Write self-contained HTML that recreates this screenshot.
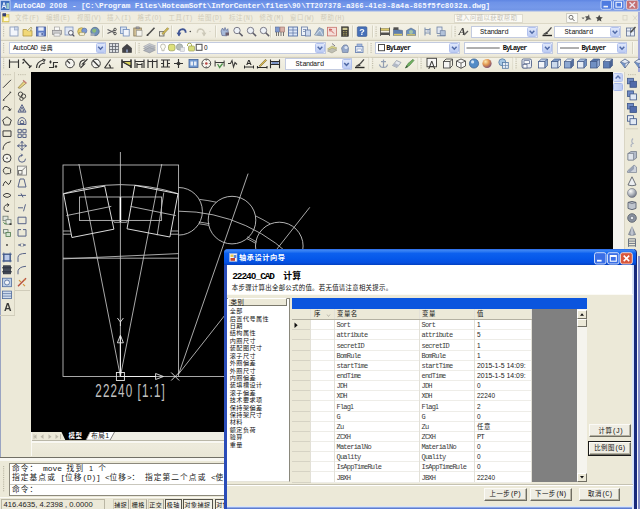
<!DOCTYPE html>
<html><head><meta charset="utf-8">
<style>
html,body{margin:0;padding:0;}
body{width:640px;height:509px;overflow:hidden;position:relative;background:#ece9d8;font-family:"Liberation Mono","Noto Sans CJK SC",monospace;font-size:8px;color:#000;}
.a{position:absolute;box-sizing:border-box;}
.t{position:absolute;white-space:pre;}
.l{font-family:"Liberation Mono",monospace;}
.d{font-family:"Liberation Sans",sans-serif;}
.c{font-family:"Liberation Sans","Noto Sans CJK SC",sans-serif;}
svg{position:absolute;left:0;top:0;overflow:visible;}
</style></head><body>
<div class="a" style="left:0.0px;top:0.0px;width:640.0px;height:12.0px;background:linear-gradient(#5f86e2 0%,#6e93e8 20%,#7699ea 60%,#7094e6 84%,#b9c6e6 94%,#e6e6e0 100%);"></div><div class="t" style="left:13.5px;top:-0.4px;height:12px;line-height:12px;color:#f4f7ff;font-weight:bold;"><span class="l" style="font-size:7.70px;letter-spacing:-0.12px">AutoCAD </span><span class="d" style="font-size:7.08px;letter-spacing:0.56px">2008</span><span class="l" style="font-size:7.70px;letter-spacing:-0.12px"> - [C:\Program Files\HoteamSoft\InforCenter\files\</span><span class="d" style="font-size:7.08px;letter-spacing:0.56px">90</span><span class="l" style="font-size:7.70px;letter-spacing:-0.12px">\TT</span><span class="d" style="font-size:7.08px;letter-spacing:0.56px">207378</span><span class="l" style="font-size:7.70px;letter-spacing:-0.12px">-a</span><span class="d" style="font-size:7.08px;letter-spacing:0.56px">366</span><span class="l" style="font-size:7.70px;letter-spacing:-0.12px">-</span><span class="d" style="font-size:7.08px;letter-spacing:0.56px">41</span><span class="l" style="font-size:7.70px;letter-spacing:-0.12px">e</span><span class="d" style="font-size:7.08px;letter-spacing:0.56px">3</span><span class="l" style="font-size:7.70px;letter-spacing:-0.12px">-</span><span class="d" style="font-size:7.08px;letter-spacing:0.56px">8</span><span class="l" style="font-size:7.70px;letter-spacing:-0.12px">a</span><span class="d" style="font-size:7.08px;letter-spacing:0.56px">4</span><span class="l" style="font-size:7.70px;letter-spacing:-0.12px">a-</span><span class="d" style="font-size:7.08px;letter-spacing:0.56px">865</span><span class="l" style="font-size:7.70px;letter-spacing:-0.12px">f</span><span class="d" style="font-size:7.08px;letter-spacing:0.56px">5</span><span class="l" style="font-size:7.70px;letter-spacing:-0.12px">fc</span><span class="d" style="font-size:7.08px;letter-spacing:0.56px">8032</span><span class="l" style="font-size:7.70px;letter-spacing:-0.12px">a.dwg]</span></div><div class="a" style="left:0.0px;top:12.0px;width:640.0px;height:12.0px;background:#f0eddf;"></div><div class="a" style="left:0.0px;top:23.2px;width:640.0px;height:1.0px;background:#dcd8c6;"></div><div class="t" style="left:15.0px;top:12.3px;height:12px;line-height:12px;color:#cfcbb9;"><span class="c" style="font-size:6.42px;letter-spacing:0.48px">文件</span><span class="l" style="font-size:6.49px;letter-spacing:-0.59px">(F)</span></div><div class="t" style="left:46.0px;top:12.3px;height:12px;line-height:12px;color:#cfcbb9;"><span class="c" style="font-size:6.42px;letter-spacing:0.48px">编辑</span><span class="l" style="font-size:6.49px;letter-spacing:-0.59px">(E)</span></div><div class="t" style="left:77.0px;top:12.3px;height:12px;line-height:12px;color:#cfcbb9;"><span class="c" style="font-size:6.42px;letter-spacing:0.48px">视图</span><span class="l" style="font-size:6.49px;letter-spacing:-0.59px">(V)</span></div><div class="t" style="left:107.0px;top:12.3px;height:12px;line-height:12px;color:#cfcbb9;"><span class="c" style="font-size:6.42px;letter-spacing:0.48px">插入</span><span class="l" style="font-size:6.49px;letter-spacing:-0.59px">(I)</span></div><div class="t" style="left:137.5px;top:12.3px;height:12px;line-height:12px;color:#cfcbb9;"><span class="c" style="font-size:6.42px;letter-spacing:0.48px">格式</span><span class="l" style="font-size:6.49px;letter-spacing:-0.59px">(O)</span></div><div class="t" style="left:168.5px;top:12.3px;height:12px;line-height:12px;color:#cfcbb9;"><span class="c" style="font-size:6.42px;letter-spacing:0.48px">工具</span><span class="l" style="font-size:6.49px;letter-spacing:-0.59px">(T)</span></div><div class="t" style="left:198.0px;top:12.3px;height:12px;line-height:12px;color:#cfcbb9;"><span class="c" style="font-size:6.42px;letter-spacing:0.48px">绘图</span><span class="l" style="font-size:6.49px;letter-spacing:-0.59px">(D)</span></div><div class="t" style="left:229.0px;top:12.3px;height:12px;line-height:12px;color:#cfcbb9;"><span class="c" style="font-size:6.42px;letter-spacing:0.48px">标注</span><span class="l" style="font-size:6.49px;letter-spacing:-0.59px">(N)</span></div><div class="t" style="left:259.5px;top:12.3px;height:12px;line-height:12px;color:#cfcbb9;"><span class="c" style="font-size:6.42px;letter-spacing:0.48px">修改</span><span class="l" style="font-size:6.49px;letter-spacing:-0.59px">(M)</span></div><div class="t" style="left:290.0px;top:12.3px;height:12px;line-height:12px;color:#cfcbb9;"><span class="c" style="font-size:6.42px;letter-spacing:0.48px">窗口</span><span class="l" style="font-size:6.49px;letter-spacing:-0.59px">(W)</span></div><div class="t" style="left:320.5px;top:12.3px;height:12px;line-height:12px;color:#cfcbb9;"><span class="c" style="font-size:6.42px;letter-spacing:0.48px">帮助</span><span class="l" style="font-size:6.49px;letter-spacing:-0.59px">(H)</span></div><div class="a" style="left:453.8px;top:13.5px;width:69.5px;height:9.5px;background:#fbfaf4;border:1px solid #dedbcd;"></div><div class="t" style="left:456.3px;top:12.4px;height:12px;line-height:12px;color:#c4c1b4;"><span class="c" style="font-size:6.32px;letter-spacing:0.48px">键入问题以获取帮助</span></div><div class="a" style="left:0.0px;top:24.0px;width:640.0px;height:48.0px;background:linear-gradient(#f3f1e6 0,#efecde 14px,#e6e2d0 16px,#f3f1e6 17px,#efecde 31px,#e6e2d0 33px,#f3f1e6 34px,#ece9d8 48px);"></div><div class="a" style="left:0.0px;top:39.8px;width:640.0px;height:0.8px;background:#d3cfbc;"></div><div class="a" style="left:0.0px;top:56.5px;width:640.0px;height:0.8px;background:#d3cfbc;"></div><div class="a" style="left:470.5px;top:25.5px;width:67.0px;height:12.5px;background:#fff;border:1px solid #c3cbe0;"></div><div class="a" style="left:527.0px;top:26.5px;width:10.0px;height:10.5px;background:linear-gradient(#dfe7fb,#bccbf3);border:0.6px solid #b1c1ee;border-radius:1.5px;"></div><div class="t" style="left:480.0px;top:25.8px;height:12px;line-height:12px;color:#222;"><span class="l" style="font-size:7.00px;letter-spacing:-0.70px">Standard</span></div><div class="a" style="left:554.0px;top:25.5px;width:66.5px;height:12.5px;background:#fff;border:1px solid #c3cbe0;"></div><div class="a" style="left:610.0px;top:26.5px;width:10.0px;height:10.5px;background:linear-gradient(#dfe7fb,#bccbf3);border:0.6px solid #b1c1ee;border-radius:1.5px;"></div><div class="t" style="left:564.4px;top:25.8px;height:12px;line-height:12px;color:#222;"><span class="l" style="font-size:7.00px;letter-spacing:-0.70px">Standard</span></div><div class="a" style="left:8.5px;top:41.5px;width:97.5px;height:12.5px;background:#fff;border:1px solid #c3cbe0;"></div><div class="a" style="left:95.5px;top:42.5px;width:10.0px;height:10.5px;background:linear-gradient(#dfe7fb,#bccbf3);border:0.6px solid #b1c1ee;border-radius:1.5px;"></div><div class="t" style="left:13.0px;top:42.0px;height:12px;line-height:12px;color:#111;"><span class="l" style="font-size:7.00px;letter-spacing:-0.76px">AutoCAD </span><span class="c" style="font-size:5.86px;letter-spacing:0.44px">经典</span></div><div class="a" style="left:157.0px;top:41.5px;width:168.5px;height:12.5px;background:#fff;border:1px solid #c3cbe0;"></div><div class="a" style="left:315.0px;top:42.5px;width:10.0px;height:10.5px;background:linear-gradient(#dfe7fb,#bccbf3);border:0.6px solid #b1c1ee;border-radius:1.5px;"></div><div class="t" style="left:204.0px;top:42.0px;height:12px;line-height:12px;color:#111;"><span class="d" style="font-size:6.44px;letter-spacing:-0.14px">0</span></div><div class="a" style="left:374.5px;top:41.5px;width:85.3px;height:12.5px;background:#fff;border:1px solid #c3cbe0;"></div><div class="a" style="left:449.3px;top:42.5px;width:10.0px;height:10.5px;background:linear-gradient(#dfe7fb,#bccbf3);border:0.6px solid #b1c1ee;border-radius:1.5px;"></div><div class="t" style="left:386.3px;top:42.0px;height:12px;line-height:12px;color:#111;font-weight:bold;"><span class="l" style="font-size:7.00px;letter-spacing:-0.76px">ByLayer</span></div><div class="a" style="left:463.5px;top:41.5px;width:89.3px;height:12.5px;background:#fff;border:1px solid #c3cbe0;"></div><div class="a" style="left:542.3px;top:42.5px;width:10.0px;height:10.5px;background:linear-gradient(#dfe7fb,#bccbf3);border:0.6px solid #b1c1ee;border-radius:1.5px;"></div><div class="t" style="left:502.7px;top:42.0px;height:12px;line-height:12px;color:#111;font-weight:bold;"><span class="l" style="font-size:7.00px;letter-spacing:-0.76px">ByLayer</span></div><div class="a" style="left:557.3px;top:41.5px;width:70.2px;height:12.5px;background:#fff;border:1px solid #c3cbe0;"></div><div class="a" style="left:617.0px;top:42.5px;width:10.0px;height:10.5px;background:linear-gradient(#dfe7fb,#bccbf3);border:0.6px solid #b1c1ee;border-radius:1.5px;"></div><div class="t" style="left:581.5px;top:42.0px;height:12px;line-height:12px;color:#111;font-weight:bold;"><span class="l" style="font-size:7.00px;letter-spacing:-0.76px">ByLayer</span></div><div class="a" style="left:285.0px;top:57.5px;width:67.0px;height:12.8px;background:#fff;border:1px solid #c3cbe0;"></div><div class="a" style="left:341.5px;top:58.5px;width:10.0px;height:10.8px;background:linear-gradient(#dfe7fb,#bccbf3);border:0.6px solid #b1c1ee;border-radius:1.5px;"></div><div class="t" style="left:295.5px;top:58.0px;height:12px;line-height:12px;color:#222;"><span class="l" style="font-size:7.00px;letter-spacing:-0.70px">Standard</span></div><div class="a" style="left:0.0px;top:72.0px;width:30.0px;height:370.0px;background:#ece9d8;"></div><div class="a" style="left:14.3px;top:72.0px;width:0.8px;height:244.0px;background:#d6d2c0;"></div><div class="a" style="left:0.0px;top:12.0px;width:1.2px;height:486.0px;background:#9aa4c2;"></div><div class="a" style="left:638.3px;top:12.0px;width:1.7px;height:497.0px;background:#a4aadc;"></div><div class="a" style="left:0.0px;top:315.0px;width:15.0px;height:0.8px;background:#d0ccba;"></div><div class="a" style="left:14.5px;top:290.0px;width:15.0px;height:0.8px;background:#d0ccba;"></div><div class="a" style="left:612.0px;top:72.0px;width:12.0px;height:360.0px;background:#f4f3ee;"></div><div class="a" style="left:612.0px;top:72.0px;width:0.8px;height:360.0px;background:#fff;"></div><div class="a" style="left:612.8px;top:72.5px;width:10.5px;height:9.5px;background:linear-gradient(90deg,#dfe7fb,#c3d0f5);border:0.6px solid #b4c3ee;border-radius:1.5px;"></div><div class="a" style="left:612.8px;top:82.5px;width:10.5px;height:8.0px;background:linear-gradient(90deg,#d2defa,#bccbf3);border:0.6px solid #a6b8ea;border-radius:1.5px;"></div><div class="a" style="left:623.5px;top:72.0px;width:16.5px;height:360.0px;background:#ece9d8;"></div><div class="a" style="left:623.5px;top:72.0px;width:0.8px;height:360.0px;background:#d9d5c4;"></div><svg width="640" height="509" viewBox="0 0 640 509" style="filter:blur(0.3px);opacity:0.88"><defs><radialGradient id="gor" cx="0.35" cy="0.3" r="0.8"><stop offset="0" stop-color="#ffe9a8"/><stop offset="0.45" stop-color="#e08a3c"/><stop offset="1" stop-color="#5a2a6a"/></radialGradient><radialGradient id="ggr" cx="0.35" cy="0.3" r="0.8"><stop offset="0" stop-color="#fff"/><stop offset="0.5" stop-color="#aab0bc"/><stop offset="1" stop-color="#50566a"/></radialGradient></defs><rect x="0.5" y="0.5" width="9.5" height="10.0" fill="#3a69b8" stroke="#dfe8f8" stroke-width="0.80"/><path d="M2 8.5 L4 2.5 L6 8.5 M3 6.5 H5" fill="none" stroke="#fff" stroke-width="1.00" /><rect x="6.5" y="3.0" width="2.5" height="6.0" fill="#9fd0c8"/><rect x="601.0" y="0.3" width="10.5" height="9.0" fill="#4a78e0" stroke="#dde6fa" stroke-width="0.90" rx="1.5"/><rect x="603.5" y="5.8" width="4.5" height="1.6" fill="#fff"/><rect x="613.5" y="0.3" width="10.5" height="9.0" fill="#4a78e0" stroke="#dde6fa" stroke-width="0.90" rx="1.5"/><rect x="616.0" y="2.3" width="5.5" height="4.8" fill="none" stroke="#fff" stroke-width="1.10"/><rect x="626.5" y="0.3" width="11.5" height="9.0" fill="#d06a62" stroke="#f2dcd8" stroke-width="0.90" rx="1.5"/><path d="M629.5 2.2 L635 7.5 M635 2.2 L629.5 7.5" fill="none" stroke="#fbeeee" stroke-width="1.40" /><rect x="2.5" y="14.5" width="6.5" height="7.5" fill="#f3dc55" stroke="#b9a94a" stroke-width="0.60"/><rect x="2.5" y="13.2" width="3.5" height="3.2" fill="#1c2a66"/><rect x="4.0" y="17.5" width="4.5" height="3.5" fill="#fffbe0"/><rect x="566.7" y="13.5" width="11.0" height="9.0" fill="#fdfdfb" stroke="#b9b7ad" stroke-width="0.70"/><circle cx="571.0" cy="17.3" r="2.0" fill="none" stroke="#555" stroke-width="0.90"/><line x1="572.4" y1="18.8" x2="574.5" y2="21.0" stroke="#555" stroke-width="1.00"/><path d="M581.5 17.5 l1.6 1.8 l1.6 -1.8z" fill="#555" /><path d="M585 21.5 l1.5 -3 l-1.5 -2 l3 -0.5 l1 -2 l0.5 3.5 l2 2 l-3 0 z" fill="#474747" /><path d="M599.2 14.8 l1.1 2.3 l2.5 0.3 l-1.9 1.7 l0.5 2.5 l-2.2 -1.3 l-2.2 1.3 l0.5 -2.5 l-1.9 -1.7 l2.5 -0.3z" fill="#333" /><line x1="613.0" y1="20.5" x2="617.0" y2="20.5" stroke="#d6d2c3" stroke-width="1.00"/><rect x="623.0" y="15.5" width="4.0" height="4.5" fill="none" stroke="#d6d2c3" stroke-width="0.90"/><path d="M633 15.5 l4 5 m0 -5 l-4 5" fill="none" stroke="#d6d2c3" stroke-width="0.90" /><rect x="3.0" y="26.5" width="1.2" height="1.1" fill="#bdb9a6"/><rect x="3.0" y="28.7" width="1.2" height="1.1" fill="#bdb9a6"/><rect x="3.0" y="30.9" width="1.2" height="1.1" fill="#bdb9a6"/><rect x="3.0" y="33.1" width="1.2" height="1.1" fill="#bdb9a6"/><rect x="3.0" y="35.3" width="1.2" height="1.1" fill="#bdb9a6"/><g transform="translate(9.0,26.5)"><rect x="1.0" y="0.5" width="8.0" height="9.0" fill="#f4f8ff" stroke="#7e92b8" stroke-width="0.90"/><rect x="5.5" y="0.5" width="3.5" height="3.0" fill="#c9d6ee" stroke="#7e92b8" stroke-width="0.60"/></g><g transform="translate(22.5,26.5)"><path d="M0.5 3 h3.5 l1 1.2 h4.5 v5.3 h-9z" fill="#f2d66a" stroke="#a88a2c" stroke-width="0.80" /><path d="M5 4 l3.5 -3.5 l1 1 l-2 3.5" fill="#e9e3b0" stroke="#8a7b3a" stroke-width="0.60" /></g><g transform="translate(36.0,26.5)"><rect x="0.5" y="0.5" width="9.0" height="9.0" fill="#4c6fc4" stroke="#2d458c" stroke-width="0.80"/><rect x="2.3" y="0.8" width="5.4" height="3.4" fill="#e9eefb"/><rect x="2.6" y="6.0" width="4.8" height="3.4" fill="#c7d3f1"/><rect x="5.5" y="6.5" width="1.3" height="2.4" fill="#2d458c"/></g><g transform="translate(52.0,26.5)"><rect x="2.5" y="0.5" width="5.0" height="3.5" fill="#fdfdfd" stroke="#888" stroke-width="0.60"/><rect x="0.5" y="3.8" width="9.0" height="4.0" fill="#c8c8cc" stroke="#77777d" stroke-width="0.70"/><rect x="2.0" y="6.6" width="6.0" height="3.0" fill="#f1f1f4" stroke="#888" stroke-width="0.60"/></g><g transform="translate(64.5,26.5)"><rect x="0.5" y="0.5" width="8.0" height="8.0" fill="#dfe8f8" stroke="#6c86b8" stroke-width="0.80"/><circle cx="6.3" cy="6.3" r="2.3" fill="#f8fbff" stroke="#445" stroke-width="0.90"/><line x1="7.8" y1="7.8" x2="9.8" y2="9.8" stroke="#334" stroke-width="1.20"/></g><g transform="translate(77.5,26.5)"><circle cx="4.0" cy="5.0" r="3.8" fill="#e8cc58" stroke="#9a8530" stroke-width="0.70"/><circle cx="6.8" cy="4.2" r="2.6" fill="#6b8dd0" stroke="#3f5a99" stroke-width="0.60"/><rect x="2.0" y="6.0" width="5.0" height="3.0" fill="#f4efcf" stroke="#8d8657" stroke-width="0.50"/></g><g transform="translate(90.0,26.5)"><circle cx="5.0" cy="5.0" r="4.2" fill="#5f86b4" stroke="#3a5576" stroke-width="0.70"/><path d="M2 4 q2 -3 4 -1 q1 2 -1 3 q-2 1 -3 -2z" fill="#7fb56a" /><rect x="0.5" y="7.0" width="4.0" height="2.5" fill="#9aa4b0"/></g><g transform="translate(107.0,26.5)"><path d="M0.5 3 L8 6.5 M0.5 7 L8 3.5" fill="none" stroke="#4a4a50" stroke-width="1.10" /><circle cx="8.0" cy="3.0" r="1.3" fill="none" stroke="#333" stroke-width="0.90"/><circle cx="8.0" cy="7.0" r="1.3" fill="none" stroke="#333" stroke-width="0.90"/></g><g transform="translate(120.0,26.5)"><rect x="0.5" y="0.5" width="6.0" height="6.5" fill="#d5e2f6" stroke="#5f7fb6" stroke-width="0.80"/><rect x="3.2" y="3.0" width="6.0" height="6.5" fill="#f3f7ff" stroke="#5f7fb6" stroke-width="0.80"/></g><g transform="translate(133.0,26.5)"><rect x="0.8" y="1.5" width="7.5" height="8.0" fill="#cdb98b" stroke="#7b6c48" stroke-width="0.80"/><rect x="3.0" y="0.4" width="3.2" height="2.0" fill="#9b9ba3" stroke="#555" stroke-width="0.50"/><rect x="3.4" y="4.0" width="5.6" height="5.5" fill="#f7f7f2" stroke="#8a8a86" stroke-width="0.60"/></g><g transform="translate(146.0,26.5)"><path d="M1 9 L4 6 L8.5 1.2" fill="none" stroke="#3a3a3a" stroke-width="1.60" /><path d="M0.5 9.5 l2.2 -0.4 l-1.6 -1.6z" fill="#222" /></g><g transform="translate(159.0,26.5)"><rect x="0.5" y="5.2" width="4.5" height="4.3" fill="#f3f1e2" stroke="#444" stroke-width="0.80"/><path d="M3 7 L8.5 1.2 L9.6 2.3 L4.2 8z" fill="#e6c83e" stroke="#6f5e1c" stroke-width="0.70" /></g><g transform="translate(176.5,26.5)"><path d="M2.5 9 Q1.2 3.2 6 2.6 Q9.2 2.6 9.2 6.2" fill="none" stroke="#27408b" stroke-width="1.80" /><path d="M0 6.3 l2.6 3.6 l2.3 -3.9z" fill="#27408b" /></g><g transform="translate(196.5,26.5)"><path d="M7.5 9 Q8.8 3.2 4 2.6 Q0.8 2.6 0.8 6.2" fill="none" stroke="#c8c4b4" stroke-width="1.50" /><path d="M10 6.3 l-2.6 3.6 l-2.3 -3.9z" fill="#c8c4b4" /></g><g transform="translate(220.0,26.5)"><path d="M2 9 L1 4.5 L2.5 1.5 L4 4 L5 1 L6.3 4 L7.8 2.2 L8.3 6 L6.8 9.3z" fill="#9eb3d8" stroke="#49598a" stroke-width="0.70" /><rect x="5.5" y="6.0" width="3.5" height="3.0" fill="#5a4a5c"/></g><g transform="translate(233.0,26.5)"><circle cx="4.0" cy="4.0" r="3.2" fill="#eef3fb" stroke="#6a6a7a" stroke-width="1.00"/><line x1="6.2" y1="6.2" x2="9.6" y2="9.6" stroke="#4a4a58" stroke-width="1.50"/></g><g transform="translate(246.5,26.5)"><circle cx="4.0" cy="4.0" r="3.2" fill="#eef3fb" stroke="#6a6a7a" stroke-width="1.00"/><line x1="6.2" y1="6.2" x2="9.6" y2="9.6" stroke="#4a4a58" stroke-width="1.50"/></g><g transform="translate(259.5,26.5)"><circle cx="4.0" cy="4.0" r="3.2" fill="#eef3fb" stroke="#6a6a7a" stroke-width="1.00"/><line x1="6.2" y1="6.2" x2="9.6" y2="9.6" stroke="#4a4a58" stroke-width="1.50"/></g><g transform="translate(275.0,26.5)"><rect x="0.5" y="0.5" width="4.0" height="5.0" fill="#6f8fcf" stroke="#3d548c" stroke-width="0.60"/><rect x="5.0" y="0.5" width="4.5" height="5.0" fill="#d6a9a0" stroke="#8a5d57" stroke-width="0.60"/><path d="M1.5 5.5 v4 M3.5 5.5 v4 M6 5.5 v4 M8.5 5.5 v4" fill="none" stroke="#555" stroke-width="0.90" /></g><g transform="translate(288.0,26.5)"><rect x="0.5" y="0.5" width="9.0" height="9.0" fill="#dbe7fa" stroke="#42609c" stroke-width="0.90"/><path d="M0.5 3.5 h9 M0.5 6.5 h9 M5 0.5 v9" fill="none" stroke="#42609c" stroke-width="0.70" /></g><g transform="translate(301.0,26.5)"><rect x="0.5" y="0.5" width="6.0" height="8.5" fill="#eef3fb" stroke="#51699c" stroke-width="0.80"/><rect x="4.5" y="3.5" width="5.0" height="6.0" fill="#c8d6ef" stroke="#51699c" stroke-width="0.80"/><path d="M2 3 h3 M2 5 h2" fill="none" stroke="#51699c" stroke-width="0.70" /></g><g transform="translate(314.0,26.5)"><path d="M0.5 8.5 L5 1 L9.5 3 L9.5 9.5z" fill="#8ea7c8" stroke="#5b6f8d" stroke-width="0.60" /><path d="M1.5 8.5 L6 3.5 L9 9" fill="none" stroke="#dfe8f4" stroke-width="0.80" /></g><g transform="translate(327.0,26.5)"><rect x="0.5" y="0.8" width="9.0" height="8.6" fill="#f5dcd8" stroke="#c0605a" stroke-width="0.80"/><path d="M2.5 2.5 l4.5 4.5 M2.5 2.5 l2.6 0.6 M2.5 2.5 l0.6 2.6" fill="none" stroke="#c43a3a" stroke-width="0.90" /></g><g transform="translate(340.0,26.5)"><rect x="1.5" y="0.3" width="7.0" height="9.6" fill="#2d2a22" stroke="#111" stroke-width="0.50"/><rect x="2.6" y="1.3" width="4.8" height="2.2" fill="#c9c28a"/><path d="M3 5 h4 M3 6.8 h4 M3 8.5 h4" fill="none" stroke="#a59a52" stroke-width="0.90" stroke-dasharray="1 0.5"/></g><g transform="translate(357.0,26.5)"><rect x="0.3" y="0.3" width="9.6" height="9.6" fill="#2f5fb4" stroke="#1d3f80" stroke-width="0.60" rx="1.0"/><text x="5" y="8.4" font-family="Liberation Sans,sans-serif" font-weight="bold" font-size="9" fill="#fff" text-anchor="middle">?</text></g><g transform="translate(380.0,26.5)"><rect x="0.5" y="2.0" width="9.0" height="2.0" fill="#d8c35a" stroke="#6f6429" stroke-width="0.50"/><rect x="0.5" y="6.0" width="9.0" height="2.5" fill="#3a3a3a"/><path d="M0.5 1 v8.5 M9.5 1 v8.5" fill="none" stroke="#333" stroke-width="0.80" /></g><g transform="translate(393.0,26.5)"><path d="M0.5 2.5 L9.5 4 L9.5 9 L0.5 9z" fill="#4a6fa8" stroke="#2c436d" stroke-width="0.50" /><rect x="0.5" y="0.8" width="5.0" height="2.6" fill="#3a3a3a"/><rect x="1.0" y="7.3" width="8.0" height="1.7" fill="#d8c35a"/></g><g transform="translate(406.0,26.5)"><path d="M0.5 4 L5 1.5 L9.5 4 L9.5 9 L0.5 9z" fill="#5b86b8" stroke="#2c436d" stroke-width="0.50" /><circle cx="5.0" cy="5.5" r="2.0" fill="#9cc0a0"/><rect x="1.0" y="7.6" width="8.0" height="1.4" fill="#c9b85a"/></g><g transform="translate(423.0,26.5)"><path d="M2 1 v8 M7 1.5 v7 M2 3 h5 M2 6.5 h5" fill="none" stroke="#7287a8" stroke-width="1.10" /><rect x="3.5" y="3.5" width="2.5" height="2.5" fill="#b9c6dc"/></g><g transform="translate(436.0,26.5)"><rect x="1.0" y="0.5" width="5.0" height="6.5" fill="#dfe7f5" stroke="#5d7399" stroke-width="0.80"/><rect x="4.2" y="4.2" width="5.0" height="5.0" fill="#a9bbd8" stroke="#5d7399" stroke-width="0.70"/><line x1="1.0" y1="9.3" x2="9.5" y2="9.3" stroke="#5d7399" stroke-width="0.80"/></g><g transform="translate(458.5,26.5)"><text x="0" y="8.5" font-family="Liberation Serif,serif" font-weight="bold" font-style="italic" font-size="11" fill="#222">A</text><path d="M5.5 8.5 l4 -4" fill="none" stroke="#4a4a4a" stroke-width="1.30" /></g><g transform="translate(542.0,26.5)"><path d="M0.5 9 H10" fill="none" stroke="#111" stroke-width="1.40" /><path d="M1.5 8 L6 5 L9.5 0.8" fill="none" stroke="#333" stroke-width="1.30" /><path d="M2.5 8.5 l2.5 -3 l1.2 1.6z" fill="#222" /></g><g transform="translate(626.0,26.5)"><rect x="0.5" y="1.5" width="8.0" height="8.0" fill="#e8eefb" stroke="#4d5f86" stroke-width="0.80"/><path d="M0.5 4.5 h8 M4.5 1.5 v8" fill="none" stroke="#4d5f86" stroke-width="0.70" /><path d="M4.5 6 L9.5 0.5" fill="none" stroke="#333" stroke-width="1.30" /></g><circle cx="190.3" cy="31.5" r="0.8" fill="#333"/><circle cx="210.0" cy="31.5" r="0.6" fill="#c8c4b4"/><line x1="47.5" y1="25.5" x2="47.5" y2="37.5" stroke="#cbc7b4" stroke-width="0.90"/><line x1="48.4" y1="25.5" x2="48.4" y2="37.5" stroke="#fbfaf3" stroke-width="0.90"/><line x1="102.5" y1="25.5" x2="102.5" y2="37.5" stroke="#cbc7b4" stroke-width="0.90"/><line x1="103.4" y1="25.5" x2="103.4" y2="37.5" stroke="#fbfaf3" stroke-width="0.90"/><line x1="171.5" y1="25.5" x2="171.5" y2="37.5" stroke="#cbc7b4" stroke-width="0.90"/><line x1="172.4" y1="25.5" x2="172.4" y2="37.5" stroke="#fbfaf3" stroke-width="0.90"/><line x1="215.5" y1="25.5" x2="215.5" y2="37.5" stroke="#cbc7b4" stroke-width="0.90"/><line x1="216.4" y1="25.5" x2="216.4" y2="37.5" stroke="#fbfaf3" stroke-width="0.90"/><line x1="270.5" y1="25.5" x2="270.5" y2="37.5" stroke="#cbc7b4" stroke-width="0.90"/><line x1="271.4" y1="25.5" x2="271.4" y2="37.5" stroke="#fbfaf3" stroke-width="0.90"/><line x1="352.5" y1="25.5" x2="352.5" y2="37.5" stroke="#cbc7b4" stroke-width="0.90"/><line x1="353.4" y1="25.5" x2="353.4" y2="37.5" stroke="#fbfaf3" stroke-width="0.90"/><line x1="372.5" y1="25.5" x2="372.5" y2="37.5" stroke="#cbc7b4" stroke-width="0.90"/><line x1="373.4" y1="25.5" x2="373.4" y2="37.5" stroke="#fbfaf3" stroke-width="0.90"/><line x1="418.5" y1="25.5" x2="418.5" y2="37.5" stroke="#cbc7b4" stroke-width="0.90"/><line x1="419.4" y1="25.5" x2="419.4" y2="37.5" stroke="#fbfaf3" stroke-width="0.90"/><line x1="452.0" y1="25.5" x2="452.0" y2="37.5" stroke="#cbc7b4" stroke-width="0.90"/><line x1="452.9" y1="25.5" x2="452.9" y2="37.5" stroke="#fbfaf3" stroke-width="0.90"/><rect x="375.5" y="26.5" width="1.2" height="1.1" fill="#bdb9a6"/><rect x="375.5" y="28.7" width="1.2" height="1.1" fill="#bdb9a6"/><rect x="375.5" y="30.9" width="1.2" height="1.1" fill="#bdb9a6"/><rect x="375.5" y="33.1" width="1.2" height="1.1" fill="#bdb9a6"/><rect x="375.5" y="35.3" width="1.2" height="1.1" fill="#bdb9a6"/><rect x="454.5" y="26.5" width="1.2" height="1.1" fill="#bdb9a6"/><rect x="454.5" y="28.7" width="1.2" height="1.1" fill="#bdb9a6"/><rect x="454.5" y="30.9" width="1.2" height="1.1" fill="#bdb9a6"/><rect x="454.5" y="33.1" width="1.2" height="1.1" fill="#bdb9a6"/><rect x="454.5" y="35.3" width="1.2" height="1.1" fill="#bdb9a6"/><path d="M529.7 30.8 l2.3 2.4 l2.3 -2.4" fill="none" stroke="#3f5b9c" stroke-width="1.50" /><path d="M612.7 30.8 l2.3 2.4 l2.3 -2.4" fill="none" stroke="#3f5b9c" stroke-width="1.50" /><rect x="3.0" y="43.0" width="1.2" height="1.1" fill="#bdb9a6"/><rect x="3.0" y="45.2" width="1.2" height="1.1" fill="#bdb9a6"/><rect x="3.0" y="47.4" width="1.2" height="1.1" fill="#bdb9a6"/><rect x="3.0" y="49.6" width="1.2" height="1.1" fill="#bdb9a6"/><rect x="3.0" y="51.8" width="1.2" height="1.1" fill="#bdb9a6"/><path d="M98.2 46.8 l2.3 2.4 l2.3 -2.4" fill="none" stroke="#3f5b9c" stroke-width="1.50" /><g transform="translate(109.0,43.0)"><rect x="0.5" y="0.5" width="9.0" height="9.0" fill="#d9dce2" stroke="#5a5f6b" stroke-width="0.80"/><path d="M0.5 3.5 h9 M0.5 6.5 h9 M3.5 0.5 v9 M6.5 0.5 v9" fill="none" stroke="#4a4f5b" stroke-width="0.80" /></g><g transform="translate(122.0,43.0)"><path d="M0.5 5 L5 1.2 L9.5 5 V9.5 H0.5z" fill="#2b2b33" stroke="#111" stroke-width="0.50" /><rect x="4.0" y="6.5" width="2.0" height="3.0" fill="#6f7fa8"/></g><line x1="135.5" y1="42.0" x2="135.5" y2="54.0" stroke="#cbc7b4" stroke-width="0.90"/><line x1="136.4" y1="42.0" x2="136.4" y2="54.0" stroke="#fbfaf3" stroke-width="0.90"/><rect x="138.5" y="43.0" width="1.2" height="1.1" fill="#bdb9a6"/><rect x="138.5" y="45.2" width="1.2" height="1.1" fill="#bdb9a6"/><rect x="138.5" y="47.4" width="1.2" height="1.1" fill="#bdb9a6"/><rect x="138.5" y="49.6" width="1.2" height="1.1" fill="#bdb9a6"/><rect x="138.5" y="51.8" width="1.2" height="1.1" fill="#bdb9a6"/><g transform="translate(143.5,42.5)"><path d="M0 4 L6 1 L12 3.4 L6 6.4z" fill="#c3c7cf" stroke="#8a8e98" stroke-width="0.50" /><path d="M0 6 L6 3 L12 5.4 L6 8.4z" fill="#b3b8c2" stroke="#80848e" stroke-width="0.50" /><path d="M0 8 L6 5 L12 7.4 L6 10.4z" fill="#a5abb6" stroke="#767a84" stroke-width="0.50" /></g><path d="M317.7 46.8 l2.3 2.4 l2.3 -2.4" fill="none" stroke="#3f5b9c" stroke-width="1.50" /><path d="M163 44 q-2.4 0 -2.4 2.6 q0 1.4 1.3 2.3 v1.8 h2.2 v-1.8 q1.3 -0.9 1.3 -2.3 q0 -2.6 -2.4 -2.6z" fill="#fdfdf4" stroke="#9a9a8a" stroke-width="0.70" /><rect x="168.5" y="44.3" width="6.5" height="6.5" fill="#d9dd6a" stroke="#8f9440" stroke-width="0.80" rx="2.0"/><circle cx="179.5" cy="47.0" r="3.2" fill="#aab5b0" stroke="#7d8a86" stroke-width="0.60"/><rect x="180.5" y="47.5" width="4.0" height="4.0" fill="#e4e8e6" stroke="#aab" stroke-width="0.50"/><path d="M187.5 46 v-1.2 q0 -1.6 2 -1.6 q2 0 2 1.6 v1.2" fill="none" stroke="#9aa23c" stroke-width="1.00" /><rect x="188.5" y="46.0" width="6.0" height="5.0" fill="#d3d96a" stroke="#8f9440" stroke-width="0.70" rx="1.0"/><rect x="196.2" y="44.3" width="5.8" height="6.0" fill="#fff" stroke="#333" stroke-width="1.00"/><g transform="translate(327.0,43.0)"><path d="M0.5 6 L5 3 L10 5 L5 8z" fill="#d9d47a" stroke="#8a8650" stroke-width="0.50" /><path d="M0.5 8 L5 5 L10 7 L5 10z" fill="#b9b9b0" stroke="#80806e" stroke-width="0.50" /><path d="M5 0.5 l3 2.5" fill="none" stroke="#667" stroke-width="1.00" /></g><g transform="translate(340.5,43.0)"><path d="M2 9.5 L1 5 Q3 0.5 6.5 2 Q9 4 7.5 9.5z" fill="#8aa0c8" stroke="#4c5f8a" stroke-width="0.60" /><circle cx="5.5" cy="4.5" r="1.6" fill="#dbe4f4"/></g><g transform="translate(354.0,43.0)"><rect x="1.5" y="3.5" width="7.5" height="6.0" fill="#dfe8f8" stroke="#5c78ae" stroke-width="0.90"/><rect x="3.0" y="1.0" width="5.0" height="2.5" fill="#9bb3de" stroke="#5c78ae" stroke-width="0.60"/><rect x="3.0" y="6.0" width="4.5" height="2.5" fill="#fff" stroke="#5c78ae" stroke-width="0.50"/></g><line x1="368.0" y1="42.0" x2="368.0" y2="54.0" stroke="#cbc7b4" stroke-width="0.90"/><line x1="368.9" y1="42.0" x2="368.9" y2="54.0" stroke="#fbfaf3" stroke-width="0.90"/><rect x="370.5" y="43.0" width="1.2" height="1.1" fill="#bdb9a6"/><rect x="370.5" y="45.2" width="1.2" height="1.1" fill="#bdb9a6"/><rect x="370.5" y="47.4" width="1.2" height="1.1" fill="#bdb9a6"/><rect x="370.5" y="49.6" width="1.2" height="1.1" fill="#bdb9a6"/><rect x="370.5" y="51.8" width="1.2" height="1.1" fill="#bdb9a6"/><path d="M452.0 46.8 l2.3 2.4 l2.3 -2.4" fill="none" stroke="#3f5b9c" stroke-width="1.50" /><rect x="378.5" y="44.5" width="6.0" height="6.2" fill="#fff" stroke="#333" stroke-width="1.00"/><path d="M545.0 46.8 l2.3 2.4 l2.3 -2.4" fill="none" stroke="#3f5b9c" stroke-width="1.50" /><line x1="466.5" y1="48.0" x2="499.7" y2="48.0" stroke="#333" stroke-width="0.90"/><path d="M619.7 46.8 l2.3 2.4 l2.3 -2.4" fill="none" stroke="#3f5b9c" stroke-width="1.50" /><line x1="560.0" y1="48.0" x2="579.0" y2="48.0" stroke="#333" stroke-width="0.90"/><line x1="632.5" y1="42.0" x2="632.5" y2="54.0" stroke="#cbc7b4" stroke-width="0.90"/><line x1="633.4" y1="42.0" x2="633.4" y2="54.0" stroke="#fbfaf3" stroke-width="0.90"/><rect x="3.0" y="58.5" width="1.2" height="1.1" fill="#bdb9a6"/><rect x="3.0" y="60.7" width="1.2" height="1.1" fill="#bdb9a6"/><rect x="3.0" y="62.9" width="1.2" height="1.1" fill="#bdb9a6"/><rect x="3.0" y="65.1" width="1.2" height="1.1" fill="#bdb9a6"/><rect x="3.0" y="67.3" width="1.2" height="1.1" fill="#bdb9a6"/><g transform="translate(9.0,58.5)"><path d="M0.5 1 V9.5 M9.5 1 V9.5 M0.5 3.5 H9.5" fill="none" stroke="#1a1a1a" stroke-width="1.15" /></g><g transform="translate(22.0,58.5)"><path d="M0.5 1.5 L2.5 0.5 M1.5 1 L8 8 M7 9.5 L9.5 7 M2 3.5 L0.5 5" fill="none" stroke="#1a1a1a" stroke-width="1.15" /></g><g transform="translate(35.5,58.5)"><path d="M1 9.5 Q1 3 8 1.5 M3.5 9.5 Q4 5 9.5 4.5 M7 0.5 L9.5 1.5 L8 3.5" fill="none" stroke="#1a1a1a" stroke-width="1.15" /></g><g transform="translate(48.5,58.5)"><path d="M0.5 9 H5 V4 H9.5 M2 2 v3 M0.8 3.5 h2.4 M7.5 6.5 v3 M6.3 8 h2.4" fill="none" stroke="#1a1a1a" stroke-width="1.15" /></g><g transform="translate(104.0,58.5)"><path d="M0.5 9.5 H9.5 M0.5 9.5 L6.5 1 M5 6 Q6.5 7.5 6.5 9.5" fill="none" stroke="#1a1a1a" stroke-width="1.15" /></g><g transform="translate(121.5,58.5)"><path d="M0.5 1 V9.5 M9.5 1 V9.5 M0.5 3 H9.5 M0.5 3 L9.5 8" fill="none" stroke="#1a1a1a" stroke-width="1.15" /></g><g transform="translate(134.5,58.5)"><path d="M0.5 1 V9.5 M9.5 1 V9.5 M0.5 3 H9.5 M2.5 6 H7.5 M2.5 4.5 V9.5 M7.5 4.5 V9.5" fill="none" stroke="#1a1a1a" stroke-width="1.15" /></g><g transform="translate(147.5,58.5)"><path d="M0.5 1 V9.5 M5 1 V9.5 M9.5 1 V9.5 M0.5 3 H9.5" fill="none" stroke="#1a1a1a" stroke-width="1.15" /></g><g transform="translate(160.5,58.5)"><path d="M0.5 1.5 H9.5 M0.5 8.5 H9.5 M3 1.5 V8.5 M7 1.5 V8.5 M0.5 5 H3 M7 5 H9.5" fill="none" stroke="#1a1a1a" stroke-width="1.15" /></g><g transform="translate(173.5,58.5)"><path d="M5 0.5 V9.5 M0.5 5 H3.5 M6.5 5 H9.5 M3.5 4 L4.5 5 L3.5 6 M6.5 4 L5.5 5 L6.5 6" fill="none" stroke="#1a1a1a" stroke-width="1.15" /></g><g transform="translate(65.0,58.5)"><circle cx="5.0" cy="5.0" r="4.3" fill="#f6f6f2" stroke="#222" stroke-width="1.00"/><line x1="5.0" y1="5.0" x2="2.0" y2="2.0" stroke="#222" stroke-width="1.10"/></g><g transform="translate(78.0,58.5)"><path d="M2 8.5 Q0.5 2 7 1.2" fill="none" stroke="#222" stroke-width="1.10" /><path d="M9.5 0.5 L4.5 5.5 L6.5 5.5 L2.5 9.5" fill="none" stroke="#222" stroke-width="1.10" /></g><g transform="translate(91.0,58.5)"><circle cx="5.0" cy="5.0" r="4.3" fill="#f6f6f2" stroke="#222" stroke-width="1.00"/><line x1="1.8" y1="1.8" x2="8.2" y2="8.2" stroke="#222" stroke-width="1.30"/></g><g transform="translate(121.5,58.5)"><path d="M0.5 3 L9.5 3 L9.5 8z" fill="#d8d24a" /></g><g transform="translate(121.5,58.5)"><path d="M0.5 1 V9.5 M9.5 1 V9.5 M0.5 3 H9.5 M0.5 3 L9.5 8" fill="none" stroke="#1a1a1a" stroke-width="1.15" /></g><g transform="translate(188.5,58.5)"><rect x="0.5" y="1.0" width="9.0" height="8.0" fill="#5f8fd0" stroke="#2c4f8c" stroke-width="0.80"/><rect x="2.0" y="3.0" width="2.5" height="4.0" fill="#e6eefa"/><rect x="5.5" y="3.0" width="2.5" height="4.0" fill="#e6eefa"/></g><g transform="translate(201.3,58.5)"><circle cx="5.0" cy="5.0" r="4.4" fill="#faf6f0" stroke="#222" stroke-width="0.90"/><circle cx="5.0" cy="5.0" r="1.3" fill="#b03030"/><path d="M5 0.5 v2 M5 7.5 v2 M0.5 5 h2 M7.5 5 h2" fill="none" stroke="#444" stroke-width="0.70" /></g><g transform="translate(214.6,58.5)"><path d="M0.5 2 V8 M9.5 2 V8 M0.5 4 H9.5" fill="none" stroke="#222" stroke-width="1.00" /><path d="M3 5.5 L5 9 L8 5" fill="none" stroke="#3c8a3c" stroke-width="1.30" /></g><g transform="translate(227.5,58.5)"><path d="M0.5 5 H3 L4.5 2 L6 8.5 L7.5 4 L9.5 6" fill="none" stroke="#222" stroke-width="1.10" /></g><g transform="translate(244.0,58.5)"><text x="5" y="6.3" font-family="Liberation Sans,sans-serif" font-weight="bold" font-size="8" fill="#111" text-anchor="middle">A</text><path d="M0.5 8.5 H9.5 M0.5 7 V10 M9.5 7 V10" fill="none" stroke="#111" stroke-width="1.00" /></g><g transform="translate(257.0,58.5)"><path d="M0.5 9 H10 M0.5 7.5 V10 M10 7.5 V10" fill="none" stroke="#111" stroke-width="1.10" /><path d="M2 7.5 L8.5 0.8 L9.6 2 L3.5 8z" fill="#d9b53c" stroke="#5a4a18" stroke-width="0.60" /></g><g transform="translate(270.0,58.5)"><path d="M0.5 1 V9.8 M9.5 1 V9.8 M0.5 3 H9.5 M0.5 6 H9.5" fill="none" stroke="#111" stroke-width="1.10" /><rect x="1.5" y="3.5" width="7.0" height="2.0" fill="#6a86c0"/></g><path d="M344.2 62.9 l2.3 2.4 l2.3 -2.4" fill="none" stroke="#3f5b9c" stroke-width="1.50" /><g transform="translate(354.5,58.5)"><path d="M0.5 9 H10" fill="none" stroke="#111" stroke-width="1.40" /><path d="M1.5 8 L6 5 L9.5 0.8" fill="none" stroke="#333" stroke-width="1.30" /><path d="M2.5 8.5 l2.5 -3 l1.2 1.6z" fill="#222" /></g><line x1="369.0" y1="57.5" x2="369.0" y2="69.5" stroke="#cbc7b4" stroke-width="0.90"/><line x1="369.9" y1="57.5" x2="369.9" y2="69.5" stroke="#fbfaf3" stroke-width="0.90"/><rect x="372.0" y="58.5" width="1.2" height="1.1" fill="#bdb9a6"/><rect x="372.0" y="60.7" width="1.2" height="1.1" fill="#bdb9a6"/><rect x="372.0" y="62.9" width="1.2" height="1.1" fill="#bdb9a6"/><rect x="372.0" y="65.1" width="1.2" height="1.1" fill="#bdb9a6"/><rect x="372.0" y="67.3" width="1.2" height="1.1" fill="#bdb9a6"/><g transform="translate(378.5,58.5)"><path d="M5 1 V9 M2.5 3.2 H7.5 M1 6 Q1.5 9 5 9 Q8.5 9 9 6" fill="none" stroke="#8694ac" stroke-width="1.20" /></g><g transform="translate(391.5,58.5)"><path d="M1 7 L5 2 L9.5 4 L5.5 9z" fill="#e4e8ef" stroke="#7a8294" stroke-width="0.70" /><path d="M1 7 L3 4.5 L7.5 6.5 L5.5 9z" fill="#a9b1c2" /></g><g transform="translate(404.5,58.5)"><path d="M1 9.5 L3.5 5 L8.5 0.8 L9.5 2 L5 7z" fill="#5faa4f" stroke="#2f6a2a" stroke-width="0.60" /><path d="M0.5 9.8 l1.6 -3 l1.6 1.6z" fill="#224a20" /></g><line x1="418.0" y1="57.5" x2="418.0" y2="69.5" stroke="#cbc7b4" stroke-width="0.90"/><line x1="418.9" y1="57.5" x2="418.9" y2="69.5" stroke="#fbfaf3" stroke-width="0.90"/><rect x="420.5" y="58.5" width="1.2" height="1.1" fill="#bdb9a6"/><rect x="420.5" y="60.7" width="1.2" height="1.1" fill="#bdb9a6"/><rect x="420.5" y="62.9" width="1.2" height="1.1" fill="#bdb9a6"/><rect x="420.5" y="65.1" width="1.2" height="1.1" fill="#bdb9a6"/><rect x="420.5" y="67.3" width="1.2" height="1.1" fill="#bdb9a6"/><g transform="translate(426.5,58.0)"><rect x="0.5" y="0.3" width="9.5" height="8.5" fill="#fafafa" stroke="#222" stroke-width="0.90"/><text x="5.3" y="10.6" font-family="Liberation Sans,sans-serif" font-size="10.5" fill="#222" text-anchor="middle">A</text></g><g transform="translate(443.0,58.5)"><rect x="0.5" y="3.0" width="6.5" height="6.5" fill="#f6f6f6" stroke="#333" stroke-width="0.90"/><path d="M0.5 3 l2.5 -2.5 h6.5 v6.5 l-2.5 2.5 M7 3 l2.5 -2.5" fill="none" stroke="#333" stroke-width="0.90" /></g><g transform="translate(456.0,58.5)"><path d="M5 0.5 L9.5 2.5 V7.5 L5 9.8 L0.5 7.5 V2.5z" fill="#fbfbfb" stroke="#333" stroke-width="0.90" /><path d="M0.5 2.5 L5 4.6 L9.5 2.5 M5 4.6 V9.8" fill="none" stroke="#333" stroke-width="0.80" /></g><g transform="translate(469.0,58.5)"><circle cx="5.0" cy="5.0" r="4.6" fill="#3d7fc4" stroke="#1b447c" stroke-width="0.70"/><circle cx="3.6" cy="3.4" r="1.6" fill="#cfe3f8"/></g><g transform="translate(482.0,58.5)"><circle cx="5" cy="5" r="4.6" fill="url(#gor)"/></g><g transform="translate(498.5,58.5)"><circle cx="3.8" cy="3.8" r="3.5" fill="#9cc2e4" stroke="#3f6a9c" stroke-width="0.80"/><rect x="4.0" y="4.0" width="5.8" height="5.8" fill="#e8f0fa" stroke="#3f6a9c" stroke-width="0.80"/><path d="M4 7 h5.8 M7 4 v5.8" fill="none" stroke="#3f6a9c" stroke-width="0.60" /></g><line x1="513.0" y1="57.5" x2="513.0" y2="69.5" stroke="#cbc7b4" stroke-width="0.90"/><line x1="513.9" y1="57.5" x2="513.9" y2="69.5" stroke="#fbfaf3" stroke-width="0.90"/><rect x="515.5" y="58.5" width="1.2" height="1.1" fill="#bdb9a6"/><rect x="515.5" y="60.7" width="1.2" height="1.1" fill="#bdb9a6"/><rect x="515.5" y="62.9" width="1.2" height="1.1" fill="#bdb9a6"/><rect x="515.5" y="65.1" width="1.2" height="1.1" fill="#bdb9a6"/><rect x="515.5" y="67.3" width="1.2" height="1.1" fill="#bdb9a6"/><g transform="translate(521.5,58.5)"><rect x="0.5" y="0.5" width="9.5" height="9.0" fill="#e9eef8" stroke="#3c4f7c" stroke-width="0.90" rx="1.5"/><rect x="2.5" y="2.2" width="5.5" height="3.0" fill="#fff" stroke="#3c4f7c" stroke-width="0.70"/><rect x="1.5" y="6.0" width="4.0" height="3.5" fill="#fff" stroke="#3c4f7c" stroke-width="0.70"/></g><g transform="translate(538.0,58.5)"><rect x="0.5" y="3.0" width="6.5" height="6.5" fill="#f2f6fc" stroke="#2f4a80" stroke-width="0.80"/><path d="M0.5 3 l3 -2.5 h6 l-2.5 2.5z" fill="#b8cae6" stroke="#2f4a80" stroke-width="0.70" /><path d="M7 3 l2.5 -2.5 v6.5 l-2.5 2.5z" fill="#7f9fd0" stroke="#2f4a80" stroke-width="0.70" /></g><g transform="translate(551.0,58.5)"><rect x="0.5" y="3.0" width="6.5" height="6.5" fill="#c8d8ee" stroke="#2f4a80" stroke-width="0.80"/><path d="M0.5 3 l3 -2.5 h6 l-2.5 2.5z" fill="#6f8fc4" stroke="#2f4a80" stroke-width="0.70" /><path d="M7 3 l2.5 -2.5 v6.5 l-2.5 2.5z" fill="#f2f6fc" stroke="#2f4a80" stroke-width="0.70" /></g><g transform="translate(564.0,58.5)"><rect x="0.5" y="3.0" width="6.5" height="6.5" fill="#7f9fd0" stroke="#2f4a80" stroke-width="0.80"/><path d="M0.5 3 l3 -2.5 h6 l-2.5 2.5z" fill="#e6eefa" stroke="#2f4a80" stroke-width="0.70" /><path d="M7 3 l2.5 -2.5 v6.5 l-2.5 2.5z" fill="#3f5f98" stroke="#2f4a80" stroke-width="0.70" /></g><g transform="translate(577.0,58.5)"><rect x="0.5" y="3.0" width="6.5" height="6.5" fill="#e4ecf8" stroke="#2f4a80" stroke-width="0.80"/><path d="M0.5 3 l3 -2.5 h6 l-2.5 2.5z" fill="#9fb8de" stroke="#2f4a80" stroke-width="0.70" /><path d="M7 3 l2.5 -2.5 v6.5 l-2.5 2.5z" fill="#5f84c0" stroke="#2f4a80" stroke-width="0.70" /></g><g transform="translate(590.0,58.5)"><rect x="0.5" y="3.0" width="6.5" height="6.5" fill="#5f84c0" stroke="#2f4a80" stroke-width="0.80"/><path d="M0.5 3 l3 -2.5 h6 l-2.5 2.5z" fill="#3f62a0" stroke="#2f4a80" stroke-width="0.70" /><path d="M7 3 l2.5 -2.5 v6.5 l-2.5 2.5z" fill="#8aa6d6" stroke="#2f4a80" stroke-width="0.70" /></g><g transform="translate(603.0,58.5)"><rect x="0.5" y="3.0" width="6.5" height="6.5" fill="#4a6fb0" stroke="#2f4a80" stroke-width="0.80"/><path d="M0.5 3 l3 -2.5 h6 l-2.5 2.5z" fill="#e8eef8" stroke="#2f4a80" stroke-width="0.70" /><path d="M7 3 l2.5 -2.5 v6.5 l-2.5 2.5z" fill="#32508c" stroke="#2f4a80" stroke-width="0.70" /></g><g transform="translate(620.0,58.5)"><path d="M5 0.5 L9.5 3.5 L5 9.5 L0.5 3.5z" fill="#e4ecf8" stroke="#3a4f7c" stroke-width="0.80" /><path d="M0.5 3.5 L5 5 L9.5 3.5 M5 5 V9.5" fill="none" stroke="#3a4f7c" stroke-width="0.70" /><path d="M0.5 3.5 L5 5 V9.5z" fill="#5f84c0" /></g><g transform="translate(634.0,58.5)"><path d="M5 0.5 L9.5 3.5 L5 9.5 L0.5 3.5z" fill="#e4ecf8" stroke="#3a4f7c" stroke-width="0.80" /><path d="M0.5 3.5 L5 5 L9.5 3.5 M5 5 V9.5" fill="none" stroke="#3a4f7c" stroke-width="0.70" /><path d="M0.5 3.5 L5 5 V9.5z" fill="#5f84c0" /></g><rect x="3.0" y="74.0" width="1.1" height="1.2" fill="#bdb9a6"/><rect x="5.2" y="74.0" width="1.1" height="1.2" fill="#bdb9a6"/><rect x="7.4" y="74.0" width="1.1" height="1.2" fill="#bdb9a6"/><rect x="9.6" y="74.0" width="1.1" height="1.2" fill="#bdb9a6"/><rect x="18.0" y="74.0" width="1.1" height="1.2" fill="#bdb9a6"/><rect x="20.2" y="74.0" width="1.1" height="1.2" fill="#bdb9a6"/><rect x="22.4" y="74.0" width="1.1" height="1.2" fill="#bdb9a6"/><rect x="24.6" y="74.0" width="1.1" height="1.2" fill="#bdb9a6"/><g transform="translate(2.0,78.8)"><path d="M1 9 L9 1" fill="none" stroke="#262626" stroke-width="1.00" /></g><g transform="translate(2.0,91.2)"><path d="M1 9 L9 1 M1 9 l1.5 0 M9 1 l-1.5 0" fill="none" stroke="#262626" stroke-width="1.00" /></g><g transform="translate(2.0,103.6)"><path d="M1 6 Q1 2 5 3 Q8 4 8 7 M8 7 l-2 -1 M8 7 l1.2 -2" fill="none" stroke="#262626" stroke-width="1.00" /></g><g transform="translate(2.0,116.0)"><path d="M5 0.8 L9.3 4 L7.7 9 H2.3 L0.7 4z" fill="none" stroke="#262626" stroke-width="1.00" /></g><g transform="translate(2.0,128.4)"><path d="M1 2.5 H9 V8 H1z" fill="none" stroke="#262626" stroke-width="1.00" /></g><g transform="translate(2.0,140.8)"><path d="M1 9 Q1 2 8.5 1" fill="none" stroke="#262626" stroke-width="1.00" /></g><g transform="translate(2.0,165.6)"><path d="M2 3 Q0.5 5 2 7 Q3 9.5 6 8 Q9.5 8.5 8.5 5.5 Q9.5 2 6 2.5 Q4 0.5 2 3z" fill="none" stroke="#262626" stroke-width="1.00" /></g><g transform="translate(2.0,178.0)"><path d="M1 8 Q3 1 5 5 Q7 9 9 2" fill="none" stroke="#262626" stroke-width="1.00" /></g><g transform="translate(2.0,190.4)"><path d="M1 5 Q5 1 9 5 Q5 9 1 5z" fill="none" stroke="#262626" stroke-width="1.00" /></g><g transform="translate(2.0,202.8)"><path d="M7 2 Q2 1.5 2 5.5 Q2 9 7 8.5 M7 2 l-2 -1.2 M7 2 l-1.6 1.8" fill="none" stroke="#262626" stroke-width="1.00" /></g><g transform="translate(2.0,153.2)"><circle cx="5.0" cy="5.0" r="4.0" fill="#f5f5f0" stroke="#222" stroke-width="1.00"/><circle cx="5.0" cy="5.0" r="0.8" fill="#222"/></g><g transform="translate(2.0,215.2)"><rect x="1.0" y="1.0" width="5.0" height="4.5" fill="#dfe6e0" stroke="#5a6a5e" stroke-width="0.80"/><rect x="4.0" y="4.5" width="5.0" height="4.5" fill="#eef2ee" stroke="#5a6a5e" stroke-width="0.80"/><path d="M1.5 7 q1 2.5 3 1.5" fill="none" stroke="#3a7a3a" stroke-width="1.00" /><rect x="7.5" y="8.0" width="2.0" height="1.8" fill="#222"/></g><g transform="translate(2.0,227.6)"><rect x="1.5" y="2.0" width="4.5" height="3.5" fill="#e4ebe4" stroke="#5a6a5e" stroke-width="0.80"/><rect x="4.0" y="4.8" width="4.5" height="4.0" fill="#cfe2cf" stroke="#3a6a3a" stroke-width="0.80"/></g><g transform="translate(2.0,240.0)"><circle cx="5.0" cy="5.0" r="0.9" fill="#222"/></g><g transform="translate(2.0,252.4)"><rect x="1.8" y="1.8" width="6.4" height="6.8" fill="#b4c6ec" stroke="#24407c" stroke-width="1.10"/><path d="M0 1.8 h10 M0 8.6 h10 M1.8 0 v10 M8.2 0 v10" fill="none" stroke="#24407c" stroke-width="0.70" /></g><g transform="translate(2.0,264.8)"><rect x="1.5" y="1.0" width="7.0" height="8.0" fill="#30384a" stroke="#101828" stroke-width="0.80"/><path d="M0 3 h10 M0 7 h10" fill="none" stroke="#101828" stroke-width="0.90" /></g><g transform="translate(2.0,277.2)"><rect x="0.5" y="1.0" width="9.0" height="8.5" fill="#b8cdea" stroke="#3a5a94" stroke-width="0.80"/><circle cx="5.0" cy="5.3" r="2.5" fill="#f2f6fc" stroke="#3a5a94" stroke-width="0.80"/></g><g transform="translate(2.0,289.6)"><rect x="0.5" y="1.5" width="9.0" height="7.5" fill="#cfdcf2" stroke="#3a5a94" stroke-width="0.80"/><path d="M0.5 4 h9 M0.5 6.5 h9" fill="none" stroke="#3a5a94" stroke-width="0.70" /></g><text x="4" y="310.9" font-family="Liberation Sans,sans-serif" font-weight="bold" font-size="10.4" fill="#222">A</text><g transform="translate(17.0,103.6)"><path d="M5 1 L9 8.5 H1z M5 3.5 L7 7.5 H3z" fill="none" stroke="#3c4a78" stroke-width="0.95" /></g><g transform="translate(17.0,116.0)"><path d="M5 1.5 Q9.5 2 9 8.5 H1 Q0.5 2 5 1.5z M5 4 Q7 4.5 7 7.5 H3 Q3 4.5 5 4z" fill="none" stroke="#3c4a78" stroke-width="0.95" /></g><g transform="translate(17.0,128.4)"><path d="M1 1 h3.3 v3.3 h-3.3z M5.8 1 h3.3 v3.3 h-3.3z M1 5.8 h3.3 v3.3 h-3.3z M5.8 5.8 h3.3 v3.3 h-3.3z" fill="none" stroke="#3c4a78" stroke-width="0.95" /></g><g transform="translate(17.0,140.8)"><path d="M5 0.5 V9.5 M0.5 5 H9.5 M5 0.5 l-1.5 2 M5 0.5 l1.5 2 M5 9.5 l-1.5 -2 M5 9.5 l1.5 -2 M0.5 5 l2 -1.5 M0.5 5 l2 1.5 M9.5 5 l-2 -1.5 M9.5 5 l-2 1.5" fill="none" stroke="#3c4a78" stroke-width="0.95" /></g><g transform="translate(17.0,153.2)"><path d="M8.5 5.5 Q8.5 9 5 9 Q1.5 9 1.5 5.5 Q1.5 2 5.5 2 M5.5 2 l-1.5 -1.5 M5.5 2 l-1.8 1.4" fill="none" stroke="#3c4a78" stroke-width="0.95" /></g><g transform="translate(17.0,178.0)"><path d="M3 1 H7 L9 9 H1z" fill="none" stroke="#3c4a78" stroke-width="0.95" /></g><g transform="translate(17.0,190.4)"><path d="M1 5 H9 M4 3 l2 4" fill="none" stroke="#3c4a78" stroke-width="0.95" /></g><g transform="translate(17.0,202.8)"><path d="M1 5 H6 M8.5 1.5 l-2 7" fill="none" stroke="#3c4a78" stroke-width="0.95" /></g><g transform="translate(17.0,215.2)"><path d="M1 2 H9 V8.5 H1z" fill="none" stroke="#3c4a78" stroke-width="0.95" /></g><g transform="translate(17.0,227.6)"><path d="M1 2 H4 M6 2 H9 V8.5 H1 V2" fill="none" stroke="#3c4a78" stroke-width="0.95" /></g><g transform="translate(17.0,240.0)"><path d="M1 5 h3 M6 5 h3 M4 3.5 l-1.5 1.5 l1.5 1.5 M6 3.5 l1.5 1.5 l-1.5 1.5" fill="none" stroke="#3c4a78" stroke-width="0.95" /></g><g transform="translate(17.0,252.4)"><path d="M1 9.5 V5 Q1 1 9 1" fill="none" stroke="#3c4a78" stroke-width="0.95" /></g><g transform="translate(17.0,264.8)"><path d="M1 9.5 V6 Q2 2 9 1.5" fill="none" stroke="#3c4a78" stroke-width="0.95" /></g><g transform="translate(17.0,78.8)"><path d="M1 9 L7 2.5 L9 4.5 L3 9.5z" fill="#e9d27a" stroke="#7a6a2a" stroke-width="0.70" /><path d="M6 1.5 l3.5 3" fill="none" stroke="#c06a6a" stroke-width="1.20" /></g><g transform="translate(17.0,91.2)"><circle cx="3.5" cy="3.0" r="2.2" fill="none" stroke="#333" stroke-width="1.00"/><circle cx="6.5" cy="5.0" r="2.2" fill="none" stroke="#333" stroke-width="1.00"/><circle cx="4.5" cy="7.5" r="1.8" fill="none" stroke="#333" stroke-width="0.90"/></g><g transform="translate(17.0,165.6)"><rect x="0.5" y="0.5" width="9.0" height="9.0" fill="#f6f6f2" stroke="#666" stroke-width="0.80"/><rect x="1.5" y="5.0" width="3.5" height="3.5" fill="none" stroke="#444" stroke-width="0.80"/><path d="M5 5 L8.5 1.5" fill="none" stroke="#444" stroke-width="0.80" /></g><g transform="translate(17.0,277.2)"><path d="M1 9 L9 1" fill="none" stroke="#b03a2a" stroke-width="1.40" /><path d="M2 3 l2 2 M6 7 l2 2 M7 2.5 l1 1" fill="none" stroke="#d08a2a" stroke-width="1.20" /></g><path d="M615.6 78.6 l2.4 -2.5 l2.4 2.5" fill="none" stroke="#4a66a6" stroke-width="1.40" /><rect x="628.0" y="74.0" width="1.1" height="1.2" fill="#bdb9a6"/><rect x="630.2" y="74.0" width="1.1" height="1.2" fill="#bdb9a6"/><rect x="632.4" y="74.0" width="1.1" height="1.2" fill="#bdb9a6"/><rect x="634.6" y="74.0" width="1.1" height="1.2" fill="#bdb9a6"/><g transform="translate(627.0,77.8)"><rect x="0.5" y="0.5" width="6.0" height="5.5" fill="#5f7fc4" stroke="#24407c" stroke-width="0.80"/><rect x="3.0" y="3.5" width="6.5" height="6.0" fill="#3c5aa4" stroke="#24407c" stroke-width="0.80"/></g><g transform="translate(627.0,90.4)"><rect x="0.5" y="0.5" width="6.0" height="5.5" fill="#5f7fc4" stroke="#24407c" stroke-width="0.80"/><rect x="3.0" y="3.5" width="6.5" height="6.0" fill="#dfe8f8" stroke="#24407c" stroke-width="0.80"/></g><g transform="translate(627.0,103.0)"><rect x="0.5" y="0.5" width="6.0" height="5.5" fill="#5f7fc4" stroke="#24407c" stroke-width="0.80"/><rect x="3.0" y="3.5" width="6.5" height="6.0" fill="#3c5aa4" stroke="#24407c" stroke-width="0.80"/></g><g transform="translate(627.0,115.2)"><rect x="0.5" y="0.5" width="6.0" height="5.5" fill="#e8eefa" stroke="#24407c" stroke-width="0.80"/><rect x="3.0" y="3.5" width="6.5" height="6.0" fill="#dfe8f8" stroke="#24407c" stroke-width="0.80"/></g><line x1="626.0" y1="128.8" x2="638.0" y2="128.8" stroke="#d0ccba" stroke-width="1.00"/><g transform="translate(627.0,137.5)"><path d="M6 1 Q3.5 4 6 6 Q3 7 4.5 9.5" fill="none" stroke="#a5adbd" stroke-width="1.20" /></g><g transform="translate(627.0,150.5)"><path d="M1 3 L4 1 H9.5 V7.5 L6.5 9.5 H1z" fill="#a9b3c6" stroke="#5a6478" stroke-width="0.70" /><rect x="1.0" y="3.0" width="5.5" height="6.5" fill="#dfe4ee" stroke="#5a6478" stroke-width="0.60"/></g><g transform="translate(627.0,163.0)"><path d="M0.5 8 L7 2 L9.5 4 L9.5 9.5 H0.5z" fill="#c9cfdb" stroke="#6a7488" stroke-width="0.70" /><path d="M0.5 8 L7 2 L7 6 L3 9.5z" fill="#8f9ab0" /></g><g transform="translate(627.0,176.0)"><path d="M5 0.8 L9 9 Q5 10.5 1 9z" fill="#eceff4" stroke="#4a4f5c" stroke-width="0.90" /></g><g transform="translate(627.0,188.0)"><circle cx="5" cy="5" r="4.5" fill="url(#ggr)" stroke="#5a6070" stroke-width="0.6"/></g><g transform="translate(627.0,200.4)"><path d="M1 2 Q5 0 9 2 V8 Q5 10.5 1 8z" fill="#b8bfcc" stroke="#4a5264" stroke-width="0.90" /><path d="M1 2 Q5 4 9 2" fill="none" stroke="#4a5264" stroke-width="0.80" /></g><g transform="translate(627.0,213.0)"><circle cx="5.0" cy="5.0" r="4.3" fill="#7d8799" stroke="#3f4656" stroke-width="0.80"/><circle cx="5.0" cy="5.0" r="1.8" fill="#dfe4ee" stroke="#3f4656" stroke-width="0.60"/></g><g transform="translate(627.0,226.0)"><path d="M5 0.8 L8.5 8.5 Q5 10.3 1.5 8.5z" fill="#9aa3b5" stroke="#5a6478" stroke-width="0.70" /><path d="M5 0.8 L5 9.6" fill="none" stroke="#e8ecf3" stroke-width="0.80" /></g><g transform="translate(627.0,237.8)"><path d="M1.5 1 h7 M1.5 3.3 h7 M1.5 5.6 h7 M1.5 8 h7 M1.5 1 v8 M8.5 1 v8" fill="none" stroke="#5a6478" stroke-width="1.00" /></g></svg><div class="a" style="left:30.8px;top:71.6px;width:581.8px;height:360.3px;background:#000;"></div><svg width="640" height="509" viewBox="0 0 640 509"><rect x="63.0" y="165.0" width="115.6" height="211.5" fill="none" stroke="#c6c6c6" stroke-width="0.85"/><line x1="178.6" y1="376.5" x2="226.0" y2="376.5" stroke="#c6c6c6" stroke-width="0.85"/><line x1="120.4" y1="152.0" x2="120.4" y2="372.0" stroke="#c6c6c6" stroke-width="0.85"/><line x1="120.4" y1="197.0" x2="120.4" y2="222.0" stroke="#fff" stroke-width="1.60"/><line x1="120.4" y1="376.5" x2="78.9" y2="164.0" stroke="#c6c6c6" stroke-width="0.85"/><line x1="120.4" y1="376.5" x2="161.8" y2="164.0" stroke="#c6c6c6" stroke-width="0.85"/><path d="M63 193.8 Q120.4 175.5 178.6 193.8" fill="none" stroke="#c6c6c6" stroke-width="0.90" /><path d="M63.6 193.8 L104.7 186.1 L113.9 229.2 L71.9 237.5z" fill="none" stroke="#e6e6e6" stroke-width="0.95" /><path d="M134.9 185.4 L178 193.8 L169.9 237 L127 228.8z" fill="none" stroke="#e6e6e6" stroke-width="0.95" /><line x1="66.4" y1="215.6" x2="111.3" y2="206.4" stroke="#c6c6c6" stroke-width="0.85"/><line x1="130.5" y1="206.4" x2="175.8" y2="215.6" stroke="#c6c6c6" stroke-width="0.85"/><line x1="163.8" y1="192.7" x2="157.2" y2="235.3" stroke="#c6c6c6" stroke-width="0.85"/><rect x="79.5" y="197.0" width="82.1" height="23.4" fill="none" stroke="#c6c6c6" stroke-width="0.85"/><path d="M113.4 220.4 L114.2 222.3 H126.6 L127.4 220.4" fill="none" stroke="#c6c6c6" stroke-width="0.80" /><line x1="63.0" y1="231.0" x2="71.0" y2="231.0" stroke="#c6c6c6" stroke-width="0.85"/><line x1="170.5" y1="231.0" x2="178.6" y2="231.0" stroke="#c6c6c6" stroke-width="0.85"/><line x1="63.0" y1="234.2" x2="71.0" y2="234.2" stroke="#c6c6c6" stroke-width="0.85"/><line x1="170.5" y1="234.2" x2="178.6" y2="234.2" stroke="#c6c6c6" stroke-width="0.85"/><line x1="63.0" y1="258.2" x2="178.6" y2="258.2" stroke="#c6c6c6" stroke-width="0.85"/><line x1="63.0" y1="258.9" x2="178.6" y2="253.6" stroke="#c6c6c6" stroke-width="0.85"/><path d="M178.6 187.5 A23.8 23.8 0 0 1 178.6 235.1" fill="none" stroke="#c6c6c6" stroke-width="0.90" /><circle cx="232.0" cy="220.1" r="23.8" fill="none" stroke="#c6c6c6" stroke-width="0.90"/><circle cx="279.3" cy="246.0" r="23.8" fill="none" stroke="#c6c6c6" stroke-width="0.90"/><path d="M178.8 211.2 A162.5 162.5 0 0 1 300.9 266.5" fill="none" stroke="#c6c6c6" stroke-width="0.85" /><path d="M199.5 199.4 A175.5 175.5 0 0 1 216.3 202.2" fill="none" stroke="#c6c6c6" stroke-width="0.80" /><path d="M255.4 215.8 A175.5 175.5 0 0 1 270.3 223.9" fill="none" stroke="#c6c6c6" stroke-width="0.80" /><path d="M302.8 249.5 A175.5 175.5 0 0 1 314.3 262.1" fill="none" stroke="#c6c6c6" stroke-width="0.80" /><path d="M199.1 223.8 A151.3 151.3 0 0 1 208.7 225.4" fill="none" stroke="#c6c6c6" stroke-width="0.80" /><path d="M247.0 238.7 A151.3 151.3 0 0 1 255.6 243.3" fill="none" stroke="#c6c6c6" stroke-width="0.80" /><path d="M287.5 268.4 A151.3 151.3 0 0 1 294.0 275.6" fill="none" stroke="#c6c6c6" stroke-width="0.80" /><path d="M198.8 222.0 A153.0 153.0 0 0 1 209.6 223.8" fill="none" stroke="#c6c6c6" stroke-width="0.80" /><path d="M247.3 236.9 A153.0 153.0 0 0 1 256.9 242.1" fill="none" stroke="#c6c6c6" stroke-width="0.80" /><path d="M288.3 266.8 A153.0 153.0 0 0 1 295.7 274.9" fill="none" stroke="#c6c6c6" stroke-width="0.80" /><line x1="178.8" y1="373.7" x2="248.1" y2="173.6" stroke="#c6c6c6" stroke-width="0.85"/><line x1="178.8" y1="373.7" x2="309.8" y2="207.3" stroke="#c6c6c6" stroke-width="0.85"/><rect x="116.4" y="372.5" width="8.0" height="8.0" fill="none" stroke="#e8e8e8" stroke-width="0.90"/><line x1="120.4" y1="376.5" x2="120.4" y2="336.0" stroke="#eee" stroke-width="1.10"/><path d="M120.4 335.2 l-3 7.6 h6z" fill="none" stroke="#e8e8e8" stroke-width="0.90" /><path d="M117.4 318 l3 4 l3 -4 m-3 4 v4" fill="none" stroke="#e8e8e8" stroke-width="0.90" /><line x1="120.4" y1="376.5" x2="156.0" y2="376.5" stroke="#eee" stroke-width="1.10"/><path d="M163.4 376.5 l-7.8 -3 v6z" fill="none" stroke="#e8e8e8" stroke-width="0.90" /><path d="M171.2 372.5 l8 8 m0 -8 l-8 8" fill="none" stroke="#e8e8e8" stroke-width="0.90" /><text transform="translate(95.3,397.2) scale(0.64,1)" font-family="Liberation Sans,sans-serif" font-size="18.2" fill="#c2c2c2" textLength="108.5" lengthAdjust="spacing">22240 [1:1]</text></svg><div class="a" style="left:30.8px;top:432.0px;width:593.0px;height:8.4px;background:#efeee4;"></div><div class="a" style="left:30.8px;top:432.0px;width:33.0px;height:8.4px;background:#ece9d8;"></div><svg width="640" height="509" viewBox="0 0 640 509"><path d="M61.5 432 L65.5 440.4 H85.5 L90 432z" fill="#000" /><path d="M90 432 L86 440.2 H110 L114.5 432" fill="#fff" stroke="#555" stroke-width="0.70" /></svg><div class="t" style="left:68.6px;top:430.3px;height:12px;line-height:12px;color:#fff;font-weight:bold;"><span class="c" style="font-size:6.42px;letter-spacing:0.48px">模型</span></div><div class="t" style="left:91.3px;top:430.3px;height:12px;line-height:12px;color:#111;"><span class="c" style="font-size:6.51px;letter-spacing:0.49px">布局</span><span class="d" style="font-size:6.88px;letter-spacing:-0.02px">1</span></div><div class="a" style="left:30.8px;top:440.3px;width:593.0px;height:0.9px;background:#bab7a8;"></div><div class="a" style="left:30.8px;top:441.2px;width:593.0px;height:2.3px;background:#f9f8f3;"></div><div class="a" style="left:30.8px;top:443.5px;width:593.0px;height:13.0px;background:linear-gradient(#eeebdd,#e9e6d5);"></div><div class="a" style="left:30.5px;top:432.2px;width:0.9px;height:24.3px;background:#faf9f4;"></div><div class="a" style="left:0.0px;top:456.5px;width:640.0px;height:1.8px;background:#716f65;"></div><div class="a" style="left:0.0px;top:458.3px;width:640.0px;height:2.6px;background:#f8f7f2;"></div><div class="a" style="left:0.0px;top:460.9px;width:640.0px;height:36.3px;background:#ece9d8;"></div><div class="a" style="left:9.0px;top:463.3px;width:631.0px;height:33.0px;background:#fff;border:1px solid #8c897c;border-right:none;"></div><div class="t" style="left:12.0px;top:463.4px;height:12px;line-height:12px;color:#222;"><span class="c" style="font-size:7.70px;letter-spacing:1.10px">命令：</span><span class="l" style="font-size:8.00px;letter-spacing:-0.10px"> move </span><span class="c" style="font-size:7.70px;letter-spacing:1.10px">找到</span><span class="l" style="font-size:8.00px;letter-spacing:-0.10px"> </span><span class="d" style="font-size:7.36px;letter-spacing:0.61px">1</span><span class="l" style="font-size:8.00px;letter-spacing:-0.10px"> </span><span class="c" style="font-size:7.70px;letter-spacing:1.10px">个</span></div><div class="t" style="left:12.0px;top:472.4px;height:12px;line-height:12px;color:#222;"><span class="c" style="font-size:7.70px;letter-spacing:1.10px">指定基点或</span><span class="l" style="font-size:7.80px;letter-spacing:-0.18px"> [</span><span class="c" style="font-size:7.70px;letter-spacing:1.10px">位移</span><span class="l" style="font-size:7.80px;letter-spacing:-0.18px">(D)] &lt;</span><span class="c" style="font-size:7.70px;letter-spacing:1.10px">位移</span><span class="l" style="font-size:7.80px;letter-spacing:-0.18px">&gt;</span><span class="c" style="font-size:7.70px;letter-spacing:1.10px">：</span><span class="l" style="font-size:7.80px;letter-spacing:-0.18px"> </span><span class="c" style="font-size:7.70px;letter-spacing:1.10px">指定第二个点或</span><span class="l" style="font-size:7.80px;letter-spacing:-0.18px"> &lt;</span><span class="c" style="font-size:7.70px;letter-spacing:1.10px">使用第一个点作为位移</span><span class="l" style="font-size:7.80px;letter-spacing:-0.18px">&gt;:</span></div><div class="a" style="left:10.0px;top:484.0px;width:630.0px;height:0.9px;background:#c9c7bd;"></div><div class="t" style="left:12.0px;top:484.0px;height:12px;line-height:12px;color:#222;"><span class="c" style="font-size:7.70px;letter-spacing:1.10px">命令：</span></div><div class="a" style="left:0.0px;top:497.2px;width:640.0px;height:12.0px;background:#ece9d8;"></div><div class="a" style="left:0.0px;top:497.2px;width:640.0px;height:0.8px;background:#fbfaf5;"></div><div class="a" style="left:1.0px;top:499.0px;width:104.0px;height:10.5px;background:#ece9d8;border:0.8px solid #bab6a4;border-bottom:none;"></div><div class="t" style="left:3.5px;top:499.5px;height:10px;line-height:10px;font-family:'Liberation Sans',sans-serif;font-size:7.6px;color:#222;letter-spacing:0.02px">416.4635, 4.2398 , 0.0000</div><div class="a" style="left:112.5px;top:498.6px;width:16.5px;height:11.0px;background:#ece9d8;border:0.8px solid #cfcbb9;border-right-color:#a6a293;"></div><div class="t" style="left:114.3px;top:498.6px;height:12px;line-height:12px;color:#111;"><span class="c" style="font-size:6.04px;letter-spacing:0.46px">捕捉</span></div><div class="a" style="left:130.0px;top:498.6px;width:16.5px;height:11.0px;background:#ece9d8;border:0.8px solid #cfcbb9;border-right-color:#a6a293;"></div><div class="t" style="left:131.8px;top:498.6px;height:12px;line-height:12px;color:#111;"><span class="c" style="font-size:6.04px;letter-spacing:0.46px">栅格</span></div><div class="a" style="left:147.5px;top:498.6px;width:16.5px;height:11.0px;background:#ece9d8;border:0.8px solid #cfcbb9;border-right-color:#a6a293;"></div><div class="t" style="left:149.3px;top:498.6px;height:12px;line-height:12px;color:#111;"><span class="c" style="font-size:6.04px;letter-spacing:0.46px">正交</span></div><div class="a" style="left:165.0px;top:498.6px;width:16.5px;height:11.0px;background:#f4f2e8;border:0.9px solid #55534a;"></div><div class="t" style="left:166.8px;top:498.6px;height:12px;line-height:12px;color:#111;"><span class="c" style="font-size:6.04px;letter-spacing:0.46px">极轴</span></div><div class="a" style="left:182.8px;top:498.6px;width:30.0px;height:11.0px;background:#f4f2e8;border:0.9px solid #55534a;"></div><div class="t" style="left:184.6px;top:498.6px;height:12px;line-height:12px;color:#111;"><span class="c" style="font-size:6.04px;letter-spacing:0.46px">对象捕捉</span></div><div class="a" style="left:214.5px;top:498.6px;width:30.0px;height:11.0px;background:#f4f2e8;border:0.9px solid #55534a;"></div><div class="t" style="left:216.3px;top:498.6px;height:12px;line-height:12px;color:#111;"><span class="c" style="font-size:6.04px;letter-spacing:0.46px">对象追踪</span></div><svg width="640" height="509" viewBox="0 0 640 509"><path d="M36.5 434.3 l-3 2.4 l3 2.4z" fill="#bdb9aa" /><path d="M43.5 434.3 l-3 2.4 l3 2.4z" fill="#bdb9aa" /><path d="M48.5 434.3 l3 2.4 l-3 2.4z" fill="#bdb9aa" /><path d="M55.5 434.3 l3 2.4 l-3 2.4z" fill="#bdb9aa" /><path d="M34 434.2 v5 M60.5 434.2 v5" fill="none" stroke="#bdb9aa" stroke-width="0.90" /><rect x="3.0" y="466.0" width="1.2" height="1.1" fill="#bdb9a6"/><rect x="3.0" y="468.2" width="1.2" height="1.1" fill="#bdb9a6"/><rect x="3.0" y="470.4" width="1.2" height="1.1" fill="#bdb9a6"/><rect x="3.0" y="472.6" width="1.2" height="1.1" fill="#bdb9a6"/><rect x="3.0" y="474.8" width="1.2" height="1.1" fill="#bdb9a6"/><rect x="3.0" y="477.0" width="1.2" height="1.1" fill="#bdb9a6"/><rect x="3.0" y="479.2" width="1.2" height="1.1" fill="#bdb9a6"/><rect x="3.0" y="481.4" width="1.2" height="1.1" fill="#bdb9a6"/><rect x="3.0" y="483.6" width="1.2" height="1.1" fill="#bdb9a6"/><rect x="3.0" y="485.8" width="1.2" height="1.1" fill="#bdb9a6"/><rect x="3.0" y="488.0" width="1.2" height="1.1" fill="#bdb9a6"/><rect x="3.0" y="490.2" width="1.2" height="1.1" fill="#bdb9a6"/></svg><div class="a" style="left:636.5px;top:256.0px;width:1.0px;height:253.0px;background:#f2f4fb;"></div><div class="a" style="left:637.5px;top:256.0px;width:2.5px;height:253.0px;background:#868fc8;"></div><div class="a" style="left:223.6px;top:248.8px;width:413.0px;height:262.0px;background:linear-gradient(90deg,#2a4cb8 0,#2a4cb8 3px,#2a4cb8 407px,#dfe8fb 408.2px,#cfdcf8 409.8px,#17297c 410.2px,#17297c 413px);border-radius:4px 4px 0 0;"></div><div class="a" style="left:224.0px;top:248.8px;width:412.0px;height:16.7px;background:linear-gradient(#2a6ae8 0,#3a84f4 10%,#0c60ee 28%,#0558ea 60%,#0650e0 85%,#0340c0 100%);border-radius:4px 4px 0 0;"></div><div class="a" style="left:226.6px;top:265.4px;width:405.2px;height:245.0px;background:#ece9d8;"></div><div class="t" style="left:239.0px;top:252.2px;height:12px;line-height:12px;color:#fff;font-weight:bold;"><span class="c" style="font-size:7.21px;letter-spacing:0.54px">轴承设计向导</span></div><div class="a" style="left:226.6px;top:265.4px;width:405.2px;height:28.8px;background:#fff;"></div><div class="a" style="left:227.0px;top:294.2px;width:406.0px;height:0.8px;background:#fbfaf5;"></div><div class="t" style="left:232.5px;top:268.9px;height:14px;line-height:14px;color:#000;font-weight:bold;"><span class="d" style="font-size:9.40px;letter-spacing:-0.61px">22240</span><span class="l" style="font-size:9.40px;letter-spacing:-1.02px">_CAD  </span><span class="c" style="font-size:8.80px;letter-spacing:0.20px">计算</span></div><div class="t" style="left:231.8px;top:281.6px;height:12px;line-height:12px;color:#111;"><span class="c" style="font-size:6.40px;letter-spacing:0.30px">本步骤计算出全部公式的值。若无值请注意相关提示。</span></div><div class="a" style="left:226.6px;top:297.5px;width:63.9px;height:184.5px;background:#fff;border:0.8px solid #8a887c;border-left:none;border-bottom-color:#e6e4da;"></div><div class="a" style="left:228.3px;top:298.2px;width:58.5px;height:8.3px;background:#ece9d8;border:0.8px solid #fff;border-right-color:#7a786c;border-bottom-color:#7a786c;"></div><div class="t" style="left:230.5px;top:296.6px;height:12px;line-height:12px;color:#111;"><span class="c" style="font-size:6.42px;letter-spacing:0.48px">类别</span></div><div class="t" style="left:229.8px;top:306.2px;height:9px;line-height:9px;color:#111;"><span class="c" style="font-size:6.10px;letter-spacing:0.46px">全部</span></div><div class="t" style="left:229.8px;top:313.6px;height:9px;line-height:9px;color:#111;"><span class="c" style="font-size:6.10px;letter-spacing:0.46px">后置代号属性</span></div><div class="t" style="left:229.8px;top:321.0px;height:9px;line-height:9px;color:#111;"><span class="c" style="font-size:6.10px;letter-spacing:0.46px">日期</span></div><div class="t" style="left:229.8px;top:328.4px;height:9px;line-height:9px;color:#111;"><span class="c" style="font-size:6.10px;letter-spacing:0.46px">结构属性</span></div><div class="t" style="left:229.8px;top:335.8px;height:9px;line-height:9px;color:#111;"><span class="c" style="font-size:6.10px;letter-spacing:0.46px">内圈尺寸</span></div><div class="t" style="left:229.8px;top:343.2px;height:9px;line-height:9px;color:#111;"><span class="c" style="font-size:6.10px;letter-spacing:0.46px">装配图尺寸</span></div><div class="t" style="left:229.8px;top:350.7px;height:9px;line-height:9px;color:#111;"><span class="c" style="font-size:6.10px;letter-spacing:0.46px">滚子尺寸</span></div><div class="t" style="left:229.8px;top:358.1px;height:9px;line-height:9px;color:#111;"><span class="c" style="font-size:6.10px;letter-spacing:0.46px">外圈偏差</span></div><div class="t" style="left:229.8px;top:365.5px;height:9px;line-height:9px;color:#111;"><span class="c" style="font-size:6.10px;letter-spacing:0.46px">外圈尺寸</span></div><div class="t" style="left:229.8px;top:372.9px;height:9px;line-height:9px;color:#111;"><span class="c" style="font-size:6.10px;letter-spacing:0.46px">内圈偏差</span></div><div class="t" style="left:229.8px;top:380.3px;height:9px;line-height:9px;color:#111;"><span class="c" style="font-size:6.10px;letter-spacing:0.46px">装填槽设计</span></div><div class="t" style="left:229.8px;top:387.7px;height:9px;line-height:9px;color:#111;"><span class="c" style="font-size:6.10px;letter-spacing:0.46px">滚子偏差</span></div><div class="t" style="left:229.8px;top:395.1px;height:9px;line-height:9px;color:#111;"><span class="c" style="font-size:6.10px;letter-spacing:0.46px">技术要求项</span></div><div class="t" style="left:229.8px;top:402.5px;height:9px;line-height:9px;color:#111;"><span class="c" style="font-size:6.10px;letter-spacing:0.46px">保持架偏差</span></div><div class="t" style="left:229.8px;top:409.9px;height:9px;line-height:9px;color:#111;"><span class="c" style="font-size:6.10px;letter-spacing:0.46px">保持架尺寸</span></div><div class="t" style="left:229.8px;top:417.4px;height:9px;line-height:9px;color:#111;"><span class="c" style="font-size:6.10px;letter-spacing:0.46px">材料</span></div><div class="t" style="left:229.8px;top:424.8px;height:9px;line-height:9px;color:#111;"><span class="c" style="font-size:6.10px;letter-spacing:0.46px">额定负荷</span></div><div class="t" style="left:229.8px;top:432.2px;height:9px;line-height:9px;color:#111;"><span class="c" style="font-size:6.10px;letter-spacing:0.46px">验算</span></div><div class="t" style="left:229.8px;top:439.6px;height:9px;line-height:9px;color:#111;"><span class="c" style="font-size:6.10px;letter-spacing:0.46px">重量</span></div><div class="a" style="left:292.0px;top:297.8px;width:295.0px;height:184.0px;background:#808080;"></div><div class="a" style="left:292.0px;top:297.8px;width:295.0px;height:11.3px;background:#0b55de;"></div><div class="a" style="left:292.0px;top:309.1px;width:239.5px;height:10.4px;background:#ece9d8;"></div><div class="a" style="left:310.8px;top:319.5px;width:220.7px;height:162.5px;background:#fff;"></div><div class="a" style="left:292.0px;top:319.5px;width:18.8px;height:162.5px;background:#ece9d8;"></div><div class="a" style="left:292.0px;top:319.1px;width:18.8px;height:0.8px;background:#d6d3c4;"></div><div class="a" style="left:310.8px;top:319.1px;width:220.7px;height:0.8px;background:#eeede8;"></div><div class="a" style="left:292.0px;top:329.2px;width:18.8px;height:0.8px;background:#d6d3c4;"></div><div class="a" style="left:310.8px;top:329.2px;width:220.7px;height:0.8px;background:#eeede8;"></div><div class="a" style="left:292.0px;top:339.4px;width:18.8px;height:0.8px;background:#d6d3c4;"></div><div class="a" style="left:310.8px;top:339.4px;width:220.7px;height:0.8px;background:#eeede8;"></div><div class="a" style="left:292.0px;top:349.6px;width:18.8px;height:0.8px;background:#d6d3c4;"></div><div class="a" style="left:310.8px;top:349.6px;width:220.7px;height:0.8px;background:#eeede8;"></div><div class="a" style="left:292.0px;top:359.7px;width:18.8px;height:0.8px;background:#d6d3c4;"></div><div class="a" style="left:310.8px;top:359.7px;width:220.7px;height:0.8px;background:#eeede8;"></div><div class="a" style="left:292.0px;top:369.9px;width:18.8px;height:0.8px;background:#d6d3c4;"></div><div class="a" style="left:310.8px;top:369.9px;width:220.7px;height:0.8px;background:#eeede8;"></div><div class="a" style="left:292.0px;top:380.0px;width:18.8px;height:0.8px;background:#d6d3c4;"></div><div class="a" style="left:310.8px;top:380.0px;width:220.7px;height:0.8px;background:#eeede8;"></div><div class="a" style="left:292.0px;top:390.2px;width:18.8px;height:0.8px;background:#d6d3c4;"></div><div class="a" style="left:310.8px;top:390.2px;width:220.7px;height:0.8px;background:#eeede8;"></div><div class="a" style="left:292.0px;top:400.3px;width:18.8px;height:0.8px;background:#d6d3c4;"></div><div class="a" style="left:310.8px;top:400.3px;width:220.7px;height:0.8px;background:#eeede8;"></div><div class="a" style="left:292.0px;top:410.5px;width:18.8px;height:0.8px;background:#d6d3c4;"></div><div class="a" style="left:310.8px;top:410.5px;width:220.7px;height:0.8px;background:#eeede8;"></div><div class="a" style="left:292.0px;top:420.6px;width:18.8px;height:0.8px;background:#d6d3c4;"></div><div class="a" style="left:310.8px;top:420.6px;width:220.7px;height:0.8px;background:#eeede8;"></div><div class="a" style="left:292.0px;top:430.8px;width:18.8px;height:0.8px;background:#d6d3c4;"></div><div class="a" style="left:310.8px;top:430.8px;width:220.7px;height:0.8px;background:#eeede8;"></div><div class="a" style="left:292.0px;top:440.9px;width:18.8px;height:0.8px;background:#d6d3c4;"></div><div class="a" style="left:310.8px;top:440.9px;width:220.7px;height:0.8px;background:#eeede8;"></div><div class="a" style="left:292.0px;top:451.1px;width:18.8px;height:0.8px;background:#d6d3c4;"></div><div class="a" style="left:310.8px;top:451.1px;width:220.7px;height:0.8px;background:#eeede8;"></div><div class="a" style="left:292.0px;top:461.2px;width:18.8px;height:0.8px;background:#d6d3c4;"></div><div class="a" style="left:310.8px;top:461.2px;width:220.7px;height:0.8px;background:#eeede8;"></div><div class="a" style="left:292.0px;top:471.4px;width:18.8px;height:0.8px;background:#d6d3c4;"></div><div class="a" style="left:310.8px;top:471.4px;width:220.7px;height:0.8px;background:#eeede8;"></div><div class="a" style="left:292.0px;top:481.5px;width:18.8px;height:0.8px;background:#d6d3c4;"></div><div class="a" style="left:310.8px;top:481.5px;width:220.7px;height:0.8px;background:#eeede8;"></div><div class="a" style="left:310.4px;top:309.1px;width:0.8px;height:173.0px;background:#e3e1d8;"></div><div class="a" style="left:334.1px;top:309.1px;width:0.8px;height:173.0px;background:#e3e1d8;"></div><div class="a" style="left:418.6px;top:309.1px;width:0.8px;height:173.0px;background:#e3e1d8;"></div><div class="a" style="left:473.6px;top:309.1px;width:0.8px;height:173.0px;background:#e3e1d8;"></div><div class="a" style="left:531.1px;top:309.1px;width:0.8px;height:173.0px;background:#e3e1d8;"></div><div class="a" style="left:292.0px;top:319.1px;width:239.5px;height:0.8px;background:#b4b1a2;"></div><div class="t" style="left:314.0px;top:308.4px;height:12px;line-height:12px;color:#111;"><span class="c" style="font-size:6.42px;letter-spacing:0.48px">序</span></div><div class="t" style="left:337.0px;top:308.4px;height:12px;line-height:12px;color:#111;"><span class="c" style="font-size:6.42px;letter-spacing:0.48px">变量名</span></div><div class="t" style="left:422.0px;top:308.4px;height:12px;line-height:12px;color:#111;"><span class="c" style="font-size:6.42px;letter-spacing:0.48px">变量</span></div><div class="t" style="left:477.0px;top:308.4px;height:12px;line-height:12px;color:#111;"><span class="c" style="font-size:6.42px;letter-spacing:0.48px">值</span></div><div class="t" style="left:336.5px;top:319.3px;height:12px;line-height:12px;color:#3a3a3a;"><span class="l" style="font-size:7.00px;letter-spacing:-0.77px">Sort</span></div><div class="t" style="left:421.5px;top:319.3px;height:12px;line-height:12px;color:#3a3a3a;"><span class="l" style="font-size:7.00px;letter-spacing:-0.77px">Sort</span></div><div class="t" style="left:477.0px;top:319.3px;height:12px;line-height:12px;color:#222;"><span class="d" style="font-size:6.44px;letter-spacing:0.02px">1</span></div><div class="t" style="left:336.5px;top:329.4px;height:12px;line-height:12px;color:#3a3a3a;"><span class="l" style="font-size:7.00px;letter-spacing:-0.77px">attribute</span></div><div class="t" style="left:421.5px;top:329.4px;height:12px;line-height:12px;color:#3a3a3a;"><span class="l" style="font-size:7.00px;letter-spacing:-0.77px">attribute</span></div><div class="t" style="left:477.0px;top:329.4px;height:12px;line-height:12px;color:#222;"><span class="d" style="font-size:6.44px;letter-spacing:0.02px">5</span></div><div class="t" style="left:336.5px;top:339.6px;height:12px;line-height:12px;color:#3a3a3a;"><span class="l" style="font-size:7.00px;letter-spacing:-0.77px">secretID</span></div><div class="t" style="left:421.5px;top:339.6px;height:12px;line-height:12px;color:#3a3a3a;"><span class="l" style="font-size:7.00px;letter-spacing:-0.77px">secretID</span></div><div class="t" style="left:477.0px;top:339.6px;height:12px;line-height:12px;color:#222;"><span class="d" style="font-size:6.44px;letter-spacing:0.02px">1</span></div><div class="t" style="left:336.5px;top:349.8px;height:12px;line-height:12px;color:#3a3a3a;"><span class="l" style="font-size:7.00px;letter-spacing:-0.77px">BomRule</span></div><div class="t" style="left:421.5px;top:349.8px;height:12px;line-height:12px;color:#3a3a3a;"><span class="l" style="font-size:7.00px;letter-spacing:-0.77px">BomRule</span></div><div class="t" style="left:477.0px;top:349.8px;height:12px;line-height:12px;color:#222;"><span class="d" style="font-size:6.44px;letter-spacing:0.02px">1</span></div><div class="t" style="left:336.5px;top:359.9px;height:12px;line-height:12px;color:#3a3a3a;"><span class="l" style="font-size:7.00px;letter-spacing:-0.77px">startTime</span></div><div class="t" style="left:421.5px;top:359.9px;height:12px;line-height:12px;color:#3a3a3a;"><span class="l" style="font-size:7.00px;letter-spacing:-0.77px">startTime</span></div><div class="t" style="left:477px;top:360.9px;height:10px;line-height:10px;font-family:'Liberation Sans',sans-serif;font-size:6.9px;color:#222;">2015-1-5 14:09:</div><div class="t" style="left:336.5px;top:370.1px;height:12px;line-height:12px;color:#3a3a3a;"><span class="l" style="font-size:7.00px;letter-spacing:-0.77px">endTime</span></div><div class="t" style="left:421.5px;top:370.1px;height:12px;line-height:12px;color:#3a3a3a;"><span class="l" style="font-size:7.00px;letter-spacing:-0.77px">endTime</span></div><div class="t" style="left:477px;top:371.1px;height:10px;line-height:10px;font-family:'Liberation Sans',sans-serif;font-size:6.9px;color:#222;">2015-1-5 14:09:</div><div class="t" style="left:336.5px;top:380.2px;height:12px;line-height:12px;color:#3a3a3a;"><span class="l" style="font-size:7.00px;letter-spacing:-0.77px">JDH</span></div><div class="t" style="left:421.5px;top:380.2px;height:12px;line-height:12px;color:#3a3a3a;"><span class="l" style="font-size:7.00px;letter-spacing:-0.77px">JDH</span></div><div class="t" style="left:477.0px;top:380.2px;height:12px;line-height:12px;color:#222;"><span class="d" style="font-size:6.44px;letter-spacing:0.02px">0</span></div><div class="t" style="left:336.5px;top:390.4px;height:12px;line-height:12px;color:#3a3a3a;"><span class="l" style="font-size:7.00px;letter-spacing:-0.77px">XDH</span></div><div class="t" style="left:421.5px;top:390.4px;height:12px;line-height:12px;color:#3a3a3a;"><span class="l" style="font-size:7.00px;letter-spacing:-0.77px">XDH</span></div><div class="t" style="left:477.0px;top:390.4px;height:12px;line-height:12px;color:#222;"><span class="d" style="font-size:6.44px;letter-spacing:0.02px">22240</span></div><div class="t" style="left:336.5px;top:400.5px;height:12px;line-height:12px;color:#3a3a3a;"><span class="l" style="font-size:7.00px;letter-spacing:-0.77px">Flag</span><span class="d" style="font-size:6.44px;letter-spacing:-0.15px">1</span></div><div class="t" style="left:421.5px;top:400.5px;height:12px;line-height:12px;color:#3a3a3a;"><span class="l" style="font-size:7.00px;letter-spacing:-0.77px">Flag</span><span class="d" style="font-size:6.44px;letter-spacing:-0.15px">1</span></div><div class="t" style="left:477.0px;top:400.5px;height:12px;line-height:12px;color:#222;"><span class="d" style="font-size:6.44px;letter-spacing:0.02px">2</span></div><div class="t" style="left:336.5px;top:410.7px;height:12px;line-height:12px;color:#3a3a3a;"><span class="l" style="font-size:7.00px;letter-spacing:-0.77px">G</span></div><div class="t" style="left:421.5px;top:410.7px;height:12px;line-height:12px;color:#3a3a3a;"><span class="l" style="font-size:7.00px;letter-spacing:-0.77px">G</span></div><div class="t" style="left:477.0px;top:410.7px;height:12px;line-height:12px;color:#222;"><span class="d" style="font-size:6.44px;letter-spacing:0.02px">0</span></div><div class="t" style="left:336.5px;top:420.8px;height:12px;line-height:12px;color:#3a3a3a;"><span class="l" style="font-size:7.00px;letter-spacing:-0.77px">Zu</span></div><div class="t" style="left:421.5px;top:420.8px;height:12px;line-height:12px;color:#3a3a3a;"><span class="l" style="font-size:7.00px;letter-spacing:-0.77px">Zu</span></div><div class="t" style="left:477.0px;top:420.8px;height:12px;line-height:12px;color:#222;"><span class="c" style="font-size:6.42px;letter-spacing:0.48px">任意</span></div><div class="t" style="left:336.5px;top:431.0px;height:12px;line-height:12px;color:#3a3a3a;"><span class="l" style="font-size:7.00px;letter-spacing:-0.77px">ZCXH</span></div><div class="t" style="left:421.5px;top:431.0px;height:12px;line-height:12px;color:#3a3a3a;"><span class="l" style="font-size:7.00px;letter-spacing:-0.77px">ZCXH</span></div><div class="t" style="left:477.0px;top:431.0px;height:12px;line-height:12px;color:#222;"><span class="l" style="font-size:7.00px;letter-spacing:-0.60px">PT</span></div><div class="t" style="left:336.5px;top:441.1px;height:12px;line-height:12px;color:#3a3a3a;"><span class="l" style="font-size:7.00px;letter-spacing:-0.77px">MaterialNo</span></div><div class="t" style="left:421.5px;top:441.1px;height:12px;line-height:12px;color:#3a3a3a;"><span class="l" style="font-size:7.00px;letter-spacing:-0.77px">MaterialNo</span></div><div class="t" style="left:477.0px;top:441.1px;height:12px;line-height:12px;color:#222;"><span class="d" style="font-size:6.44px;letter-spacing:0.02px">0</span></div><div class="t" style="left:336.5px;top:451.2px;height:12px;line-height:12px;color:#3a3a3a;"><span class="l" style="font-size:7.00px;letter-spacing:-0.77px">Quality</span></div><div class="t" style="left:421.5px;top:451.2px;height:12px;line-height:12px;color:#3a3a3a;"><span class="l" style="font-size:7.00px;letter-spacing:-0.77px">Quality</span></div><div class="t" style="left:477.0px;top:451.2px;height:12px;line-height:12px;color:#222;"><span class="d" style="font-size:6.44px;letter-spacing:0.02px">0</span></div><div class="t" style="left:336.5px;top:461.4px;height:12px;line-height:12px;color:#3a3a3a;"><span class="l" style="font-size:7.00px;letter-spacing:-0.77px">IsAppTimeRule</span></div><div class="t" style="left:421.5px;top:461.4px;height:12px;line-height:12px;color:#3a3a3a;"><span class="l" style="font-size:7.00px;letter-spacing:-0.77px">IsAppTimeRule</span></div><div class="t" style="left:477.0px;top:461.4px;height:12px;line-height:12px;color:#222;"><span class="d" style="font-size:6.44px;letter-spacing:0.02px">0</span></div><div class="t" style="left:336.5px;top:471.6px;height:12px;line-height:12px;color:#3a3a3a;"><span class="l" style="font-size:7.00px;letter-spacing:-0.77px">JBXH</span></div><div class="t" style="left:421.5px;top:471.6px;height:12px;line-height:12px;color:#3a3a3a;"><span class="l" style="font-size:7.00px;letter-spacing:-0.77px">JBXH</span></div><div class="t" style="left:477.0px;top:471.6px;height:12px;line-height:12px;color:#222;"><span class="d" style="font-size:6.44px;letter-spacing:0.02px">22240</span></div><div class="a" style="left:577.0px;top:309.1px;width:10.0px;height:173.0px;background:#f5f4ee;"></div><div class="a" style="left:577.0px;top:309.6px;width:10.0px;height:9.3px;background:#ece9d8;border:0.8px solid #fff;border-right-color:#716f64;border-bottom-color:#716f64;"></div><div class="a" style="left:577.0px;top:319.2px;width:10.0px;height:7.5px;background:#ece9d8;border:0.8px solid #fff;border-right-color:#716f64;border-bottom-color:#716f64;"></div><div class="a" style="left:577.0px;top:472.6px;width:10.0px;height:9.3px;background:#ece9d8;border:0.8px solid #fff;border-right-color:#716f64;border-bottom-color:#716f64;"></div><div class="a" style="left:589.0px;top:424.2px;width:41.6px;height:12.4px;background:#efede3;border:0.9px solid #fbfaf6;border-right-color:#6f6d62;border-bottom-color:#6f6d62;box-shadow:inset -0.9px -0.9px 0 #b3b0a0;"></div><div class="t" style="left:598.5px;top:424.6px;height:12px;line-height:12px;color:#111;"><span class="c" style="font-size:6.42px;letter-spacing:0.48px">计算</span><span class="l" style="font-size:6.88px;letter-spacing:-0.63px">(J)</span></div><div class="a" style="left:588.1px;top:440.6px;width:43.4px;height:15.0px;background:#1a1a1a;"></div><div class="a" style="left:589.0px;top:441.5px;width:41.6px;height:13.2px;background:#efede3;border:0.9px solid #fbfaf6;border-right-color:#6f6d62;border-bottom-color:#6f6d62;box-shadow:inset -0.9px -0.9px 0 #b3b0a0;"></div><div class="t" style="left:594.2px;top:442.2px;height:12px;line-height:12px;color:#111;"><span class="c" style="font-size:6.42px;letter-spacing:0.48px">比例图</span><span class="l" style="font-size:6.88px;letter-spacing:-0.63px">(G)</span></div><div class="a" style="left:227.0px;top:484.0px;width:406.0px;height:0.8px;background:#c5c2b2;"></div><div class="a" style="left:227.0px;top:484.8px;width:406.0px;height:0.8px;background:#fff;"></div><div class="a" style="left:484.0px;top:487.5px;width:42.7px;height:13.1px;background:#efede3;border:0.9px solid #fbfaf6;border-right-color:#6f6d62;border-bottom-color:#6f6d62;box-shadow:inset -0.9px -0.9px 0 #b3b0a0;"></div><div class="t" style="left:489.5px;top:488.2px;height:12px;line-height:12px;color:#111;"><span class="c" style="font-size:6.42px;letter-spacing:0.48px">上一步</span><span class="l" style="font-size:6.88px;letter-spacing:-0.63px">(P)</span></div><div class="a" style="left:530.0px;top:487.5px;width:41.5px;height:13.1px;background:#efede3;border:0.9px solid #fbfaf6;border-right-color:#6f6d62;border-bottom-color:#6f6d62;box-shadow:inset -0.9px -0.9px 0 #b3b0a0;"></div><div class="t" style="left:535.0px;top:488.2px;height:12px;line-height:12px;color:#111;"><span class="c" style="font-size:6.42px;letter-spacing:0.48px">下一步</span><span class="l" style="font-size:6.88px;letter-spacing:-0.63px">(N)</span></div><div class="a" style="left:579.0px;top:487.5px;width:41.0px;height:13.1px;background:#efede3;border:0.9px solid #fbfaf6;border-right-color:#6f6d62;border-bottom-color:#6f6d62;box-shadow:inset -0.9px -0.9px 0 #b3b0a0;"></div><div class="t" style="left:588.0px;top:488.2px;height:12px;line-height:12px;color:#111;"><span class="c" style="font-size:6.42px;letter-spacing:0.48px">取消</span><span class="l" style="font-size:6.88px;letter-spacing:-0.63px">(C)</span></div><div class="a" style="left:226.6px;top:505.8px;width:405.2px;height:1.2px;background:#dbe6f8;"></div><div class="a" style="left:226.6px;top:507.0px;width:405.2px;height:2.0px;background:linear-gradient(#a9c0ee,#4466c8);"></div><svg width="640" height="509" viewBox="0 0 640 509"><rect x="229.5" y="253.5" width="7.5" height="8.0" fill="#f2f4fa" stroke="#9fb0d8" stroke-width="0.60"/><rect x="230.5" y="254.5" width="3.0" height="2.5" fill="#e8c94a"/><rect x="233.8" y="255.0" width="2.5" height="3.0" fill="#5c86d8"/><rect x="230.5" y="258.0" width="4.5" height="2.8" fill="#c4452c"/><rect x="594.5" y="252.7" width="11.5" height="11.3" fill="#3a6fe6" stroke="#dfe8fb" stroke-width="0.90" rx="2.0"/><rect x="597.0" y="259.8" width="4.6" height="1.8" fill="#fff"/><rect x="607.5" y="252.7" width="11.5" height="11.3" fill="#3a6fe6" stroke="#dfe8fb" stroke-width="0.90" rx="2.0"/><rect x="610.3" y="255.6" width="6.0" height="5.6" fill="none" stroke="#fff" stroke-width="1.10"/><line x1="610.3" y1="256.3" x2="616.3" y2="256.3" stroke="#fff" stroke-width="1.30"/><rect x="620.5" y="252.7" width="11.8" height="11.3" fill="#d9573c" stroke="#f6dfd8" stroke-width="0.90" rx="2.0"/><path d="M623.7 255.6 l5.5 5.5 m0 -5.5 l-5.5 5.5" fill="none" stroke="#fff" stroke-width="1.50" /><path d="M327 314.5 l1.5 2 l1.5 -2" fill="none" stroke="#aaa89c" stroke-width="0.70" /><path d="M294.5 322.5 l3.2 2.7 l-3.2 2.7z" fill="#111" /><path d="M580 315.8 l2 -2.6 l2 2.6z" fill="#111" /><path d="M580 476 l2 2.6 l2 -2.6z" fill="#111" /></svg>
</body></html>
